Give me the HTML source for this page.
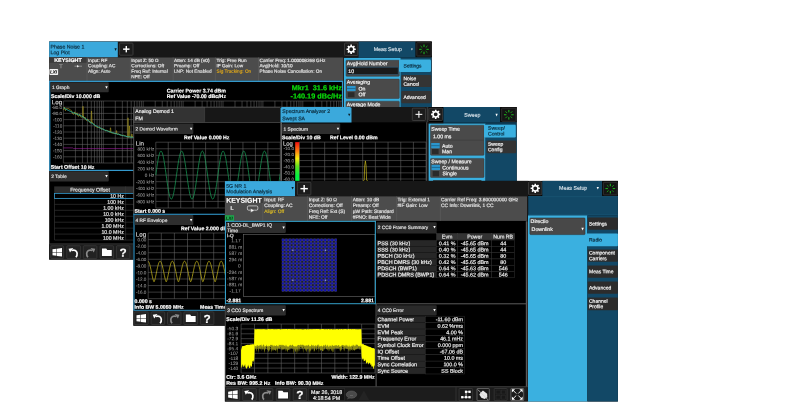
<!DOCTYPE html>
<html><head><meta charset="utf-8"><title>Keysight X-Series multi-touch UI</title>
<style>html,body{margin:0;padding:0;background:#fff}body{width:812px;height:411px;overflow:hidden}svg{display:block}text{white-space:pre;text-rendering:geometricPrecision;stroke-width:0.18px;stroke-linejoin:round}</style></head>
<body>
<svg width="812" height="411" viewBox="0 0 812 411" font-family="'Liberation Sans', sans-serif">
<defs><filter id="gs" x="0" y="0" width="812" height="411" filterUnits="userSpaceOnUse"><feOffset dx="0" dy="0"/></filter></defs>
<rect width="812" height="411" fill="#fff"/>
<g filter="url(#gs)">
<g id="w1">
<rect x="49.2" y="41.6" width="382.5" height="218" fill="#000"/>
<rect x="49.2" y="41.6" width="382.5" height="15.8" fill="#171717"/>
<rect x="49.2" y="41.6" width="68.6" height="15.8" fill="#3ba9dc"/>
<text x="50.6" y="48.55" transform="matrix(1 .0005 0 1 0 -0.0253)" font-size="5.2" fill="#0c2c3e" stroke="#0c2c3e">Phase Noise 1</text>
<text x="50.6" y="54.15" transform="matrix(1 .0005 0 1 0 -0.0253)" font-size="5.2" fill="#0c2c3e" stroke="#0c2c3e">Log Plot</text>
<path d="M114.45 48.3 h2.3 l-1.15 2.6 z" fill="#0a1a22"/>
<rect x="119.6" y="43.1" width="13.4" height="12.1" fill="#1c1c1c" stroke="#484848" stroke-width="0.7" rx="0.8"/>
<line x1="123.1" y1="49.15" x2="129.5" y2="49.15" stroke="#fff" stroke-width="1.45"/>
<line x1="126.3" y1="45.95" x2="126.3" y2="52.35" stroke="#fff" stroke-width="1.45"/>
<rect x="344.5" y="43" width="13.3" height="12.5" fill="#1c1c1c" stroke="#484848" stroke-width="0.7" rx="0.8"/>
<path d="M355.78 48.44 L355.78 50.06 L354.55 50.07 L354.13 51.08 L355 51.95 L353.85 53.1 L352.98 52.23 L351.97 52.65 L351.96 53.88 L350.34 53.88 L350.33 52.65 L349.32 52.23 L348.45 53.1 L347.3 51.95 L348.17 51.08 L347.75 50.07 L346.52 50.06 L346.52 48.44 L347.75 48.43 L348.17 47.42 L347.3 46.55 L348.45 45.4 L349.32 46.27 L350.33 45.85 L350.34 44.62 L351.96 44.62 L351.97 45.85 L352.98 46.27 L353.85 45.4 L355 46.55 L354.13 47.42 L354.55 48.43 Z M349.25 49.25 a1.9 1.9 0 1 0 3.8 0 a1.9 1.9 0 1 0 -3.8 0 Z" fill="#fff" fill-rule="evenodd"/>
<rect x="358.6" y="41.6" width="57" height="15.8" fill="#124866"/>
<text x="387.8" y="51.08" transform="matrix(1 .0005 0 1 0 -0.1939)" font-size="5.3" fill="#d2dee6" stroke="#d2dee6" text-anchor="middle">Meas Setup</text>
<path d="M411 48.4 h1.8 l-0.9 2.2 z" fill="#fff"/>
<rect x="415.6" y="41.6" width="16.1" height="15.9" fill="#0c0c0c"/>
<rect x="416.8" y="42.7" width="14.4" height="13.3" fill="#141414" stroke="#3a3a3a" stroke-width="0.7" rx="0.6"/>
<line x1="424" y1="46.55" x2="424" y2="44.9" stroke="#22d422" stroke-width="0.9" stroke-linecap="round"/>
<line x1="425.98" y1="47.37" x2="427.15" y2="46.2" stroke="#18b018" stroke-width="0.9" stroke-linecap="round"/>
<line x1="426.8" y1="49.35" x2="428.45" y2="49.35" stroke="#20cc20" stroke-width="0.9" stroke-linecap="round"/>
<line x1="425.98" y1="51.33" x2="427.15" y2="52.5" stroke="#149a14" stroke-width="0.9" stroke-linecap="round"/>
<line x1="424" y1="52.15" x2="424" y2="53.8" stroke="#22d022" stroke-width="0.9" stroke-linecap="round"/>
<line x1="422.02" y1="51.33" x2="420.85" y2="52.5" stroke="#18b418" stroke-width="0.9" stroke-linecap="round"/>
<line x1="421.2" y1="49.35" x2="419.55" y2="49.35" stroke="#20cc20" stroke-width="0.9" stroke-linecap="round"/>
<line x1="422.02" y1="47.37" x2="420.85" y2="46.2" stroke="#18ac18" stroke-width="0.9" stroke-linecap="round"/>
<rect x="49.2" y="57.4" width="293.8" height="23.3" fill="#4c4c4c"/>
<rect x="49.2" y="57.4" width="37.8" height="5.4" fill="#3a3a3a"/>
<line x1="87" y1="57.4" x2="87" y2="80.7" stroke="#5e5e5e" stroke-width="0.6"/>
<line x1="130.4" y1="57.4" x2="130.4" y2="80.7" stroke="#5e5e5e" stroke-width="0.6"/>
<line x1="173.1" y1="57.4" x2="173.1" y2="80.7" stroke="#5e5e5e" stroke-width="0.6"/>
<line x1="215.4" y1="57.4" x2="215.4" y2="80.7" stroke="#5e5e5e" stroke-width="0.6"/>
<line x1="258.5" y1="57.4" x2="258.5" y2="80.7" stroke="#5e5e5e" stroke-width="0.6"/>
<text x="68" y="62.12" transform="matrix(1 .0005 0 1 0 -0.0340)" font-size="5.4" fill="#fff" stroke="#fff" text-anchor="middle" font-weight="bold">KEYSIGHT</text>
<text x="61" y="68.29" transform="matrix(1 .0005 0 1 0 -0.0305)" font-size="5.6" fill="#9a9a9a" stroke="#9a9a9a" text-anchor="middle">T</text>
<line x1="74.5" y1="66.2" x2="82" y2="66.2" stroke="#cfcfcf" stroke-width="0.5"/>
<path d="M77 65 l2 1.2 l-2 1.2z" fill="#eee"/>
<rect x="49.4" y="69.1" width="8.7" height="5.8" fill="#f2f2f2" rx="0.6"/>
<text x="53.6" y="73.6" transform="matrix(1 .0005 0 1 0 -0.0268)" font-size="4.5" fill="#222" stroke="#222" text-anchor="middle" font-weight="bold" font-style="italic">LXI</text>
<text x="88" y="61.97" transform="matrix(1 .0005 0 1 0 -0.0440)" font-size="4.7" fill="#e4e4e4" stroke="#e4e4e4">Input: RF</text>
<text x="88" y="67.37" transform="matrix(1 .0005 0 1 0 -0.0440)" font-size="4.7" fill="#e4e4e4" stroke="#e4e4e4">Coupling: AC</text>
<text x="88" y="72.77" transform="matrix(1 .0005 0 1 0 -0.0440)" font-size="4.7" fill="#e4e4e4" stroke="#e4e4e4">Align: Auto</text>
<text x="131.3" y="61.97" transform="matrix(1 .0005 0 1 0 -0.0657)" font-size="4.7" fill="#e4e4e4" stroke="#e4e4e4">Input Z: 50 Ω</text>
<text x="131.3" y="67.37" transform="matrix(1 .0005 0 1 0 -0.0657)" font-size="4.7" fill="#e4e4e4" stroke="#e4e4e4">Corrections: Off</text>
<text x="131.3" y="72.77" transform="matrix(1 .0005 0 1 0 -0.0657)" font-size="4.7" fill="#e4e4e4" stroke="#e4e4e4">Freq Ref: Internal</text>
<text x="131.3" y="78.17" transform="matrix(1 .0005 0 1 0 -0.0657)" font-size="4.7" fill="#e4e4e4" stroke="#e4e4e4">NFE: Off</text>
<text x="174" y="61.97" transform="matrix(1 .0005 0 1 0 -0.0870)" font-size="4.7" fill="#e4e4e4" stroke="#e4e4e4">Atten: 14 dB (e0)</text>
<text x="174" y="67.37" transform="matrix(1 .0005 0 1 0 -0.0870)" font-size="4.7" fill="#e4e4e4" stroke="#e4e4e4">Preamp: Off</text>
<text x="174" y="72.77" transform="matrix(1 .0005 0 1 0 -0.0870)" font-size="4.7" fill="#e4e4e4" stroke="#e4e4e4">LNP: Not Enabled</text>
<text x="216.5" y="61.97" transform="matrix(1 .0005 0 1 0 -0.1082)" font-size="4.7" fill="#e4e4e4" stroke="#e4e4e4">Trig: Free Run</text>
<text x="216.5" y="67.37" transform="matrix(1 .0005 0 1 0 -0.1082)" font-size="4.7" fill="#e4e4e4" stroke="#e4e4e4">IF Gain: Low</text>
<text x="216.5" y="72.77" transform="matrix(1 .0005 0 1 0 -0.1082)" font-size="4.7" fill="#dba51c" stroke="#dba51c">Sig Tracking: On</text>
<text x="259.5" y="61.97" transform="matrix(1 .0005 0 1 0 -0.1298)" font-size="4.7" fill="#e4e4e4" stroke="#e4e4e4">Carrier Freq: 1.000008268 GHz</text>
<text x="259.5" y="67.37" transform="matrix(1 .0005 0 1 0 -0.1298)" font-size="4.7" fill="#e4e4e4" stroke="#e4e4e4">Avg|Hold: 10/10</text>
<text x="259.5" y="72.77" transform="matrix(1 .0005 0 1 0 -0.1298)" font-size="4.7" fill="#e4e4e4" stroke="#e4e4e4">Phase Noise Cancellation: On</text>
<rect x="49.2" y="80.6" width="294" height="1.4" fill="#3398cb"/>
<rect x="49.2" y="81" width="1.2" height="89.8" fill="#3398cb"/>
<rect x="341.9" y="81" width="1.3" height="27" fill="#3398cb"/>
<rect x="50.5" y="82.2" width="58.2" height="10.1" fill="#2e2e2e" rx="0.8"/>
<text x="52" y="89.1" transform="matrix(1 .0005 0 1 0 -0.0260)" font-size="4.8" fill="#e0e0e0" stroke="#e0e0e0">1 Graph</text>
<path d="M105.25 86.15 h2.5 l-1.25 2.5 z" fill="#fff"/>
<text x="51" y="98.06" transform="matrix(1 .0005 0 1 0 -0.0255)" font-size="5.25" fill="#fff" stroke="#fff" font-weight="bold">Scale/Div 10.000 dB</text>
<text x="196.4" y="92.56" transform="matrix(1 .0005 0 1 0 -0.0982)" font-size="5.25" fill="#fff" stroke="#fff" text-anchor="middle" font-weight="bold">Carrier Power 3.74 dBm</text>
<text x="196.4" y="97.96" transform="matrix(1 .0005 0 1 0 -0.0982)" font-size="5.25" fill="#fff" stroke="#fff" text-anchor="middle" font-weight="bold">Ref Value -70.00 dBc/Hz</text>
<text x="342" y="90.19" transform="matrix(1 .0005 0 1 0 -0.1710)" font-size="7.3" fill="#0be00b" stroke="#0be00b" text-anchor="end" font-weight="bold" xml:space="preserve">Mkr1  31.6 kHz</text>
<text x="342" y="98.49" transform="matrix(1 .0005 0 1 0 -0.1710)" font-size="7.3" fill="#0be00b" stroke="#0be00b" text-anchor="end" font-weight="bold">-140.19 dBc/Hz</text>
<text x="51.8" y="104.2" transform="matrix(1 .0005 0 1 0 -0.0259)" font-size="6.2" fill="#d0d0d0" stroke="#d0d0d0">Log</text>
<text x="62.2" y="108.93" transform="matrix(1 .0005 0 1 0 -0.0311)" font-size="4.6" fill="#9a9a9a" stroke="#9a9a9a" text-anchor="end" style="stroke-width:.06px">-80.0</text>
<text x="62.2" y="115.13" transform="matrix(1 .0005 0 1 0 -0.0311)" font-size="4.6" fill="#9a9a9a" stroke="#9a9a9a" text-anchor="end" style="stroke-width:.06px">-90.0</text>
<text x="62.2" y="121.33" transform="matrix(1 .0005 0 1 0 -0.0311)" font-size="4.6" fill="#9a9a9a" stroke="#9a9a9a" text-anchor="end" style="stroke-width:.06px">-100</text>
<text x="62.2" y="127.53" transform="matrix(1 .0005 0 1 0 -0.0311)" font-size="4.6" fill="#9a9a9a" stroke="#9a9a9a" text-anchor="end" style="stroke-width:.06px">-110</text>
<text x="62.2" y="133.73" transform="matrix(1 .0005 0 1 0 -0.0311)" font-size="4.6" fill="#9a9a9a" stroke="#9a9a9a" text-anchor="end" style="stroke-width:.06px">-120</text>
<text x="62.2" y="139.93" transform="matrix(1 .0005 0 1 0 -0.0311)" font-size="4.6" fill="#9a9a9a" stroke="#9a9a9a" text-anchor="end" style="stroke-width:.06px">-130</text>
<text x="62.2" y="146.13" transform="matrix(1 .0005 0 1 0 -0.0311)" font-size="4.6" fill="#9a9a9a" stroke="#9a9a9a" text-anchor="end" style="stroke-width:.06px">-140</text>
<text x="62.2" y="152.33" transform="matrix(1 .0005 0 1 0 -0.0311)" font-size="4.6" fill="#9a9a9a" stroke="#9a9a9a" text-anchor="end" style="stroke-width:.06px">-150</text>
<text x="62.2" y="158.53" transform="matrix(1 .0005 0 1 0 -0.0311)" font-size="4.6" fill="#9a9a9a" stroke="#9a9a9a" text-anchor="end" style="stroke-width:.06px">-160</text>
<line x1="63.4" y1="101" x2="342" y2="101" stroke="#686868" stroke-width="0.55"/>
<line x1="63.4" y1="107.2" x2="342" y2="107.2" stroke="#686868" stroke-width="0.55"/>
<line x1="63.4" y1="113.4" x2="342" y2="113.4" stroke="#686868" stroke-width="0.55"/>
<line x1="63.4" y1="119.6" x2="342" y2="119.6" stroke="#686868" stroke-width="0.55"/>
<line x1="63.4" y1="125.8" x2="342" y2="125.8" stroke="#686868" stroke-width="0.55"/>
<line x1="63.4" y1="132" x2="342" y2="132" stroke="#686868" stroke-width="0.55"/>
<line x1="63.4" y1="138.2" x2="342" y2="138.2" stroke="#686868" stroke-width="0.55"/>
<line x1="63.4" y1="144.4" x2="342" y2="144.4" stroke="#686868" stroke-width="0.55"/>
<line x1="63.4" y1="150.6" x2="342" y2="150.6" stroke="#686868" stroke-width="0.55"/>
<line x1="63.4" y1="156.8" x2="342" y2="156.8" stroke="#686868" stroke-width="0.55"/>
<line x1="63.4" y1="163" x2="342" y2="163" stroke="#686868" stroke-width="0.55"/>
<line x1="63.4" y1="101" x2="63.4" y2="163" stroke="#686868" stroke-width="0.55"/>
<line x1="75.41" y1="101" x2="75.41" y2="163" stroke="#686868" stroke-width="0.55"/>
<line x1="82.44" y1="101" x2="82.44" y2="163" stroke="#686868" stroke-width="0.55"/>
<line x1="87.42" y1="101" x2="87.42" y2="163" stroke="#686868" stroke-width="0.55"/>
<line x1="91.29" y1="101" x2="91.29" y2="163" stroke="#686868" stroke-width="0.55"/>
<line x1="94.45" y1="101" x2="94.45" y2="163" stroke="#686868" stroke-width="0.55"/>
<line x1="97.12" y1="101" x2="97.12" y2="163" stroke="#686868" stroke-width="0.55"/>
<line x1="99.43" y1="101" x2="99.43" y2="163" stroke="#686868" stroke-width="0.55"/>
<line x1="101.47" y1="101" x2="101.47" y2="163" stroke="#686868" stroke-width="0.55"/>
<line x1="103.3" y1="101" x2="103.3" y2="163" stroke="#686868" stroke-width="0.55"/>
<line x1="115.31" y1="101" x2="115.31" y2="163" stroke="#686868" stroke-width="0.55"/>
<line x1="122.34" y1="101" x2="122.34" y2="163" stroke="#686868" stroke-width="0.55"/>
<line x1="127.32" y1="101" x2="127.32" y2="163" stroke="#686868" stroke-width="0.55"/>
<line x1="131.19" y1="101" x2="131.19" y2="163" stroke="#686868" stroke-width="0.55"/>
<line x1="134.35" y1="101" x2="134.35" y2="163" stroke="#686868" stroke-width="0.55"/>
<line x1="137.02" y1="101" x2="137.02" y2="163" stroke="#686868" stroke-width="0.55"/>
<line x1="139.33" y1="101" x2="139.33" y2="163" stroke="#686868" stroke-width="0.55"/>
<line x1="141.37" y1="101" x2="141.37" y2="163" stroke="#686868" stroke-width="0.55"/>
<line x1="143.2" y1="101" x2="143.2" y2="163" stroke="#686868" stroke-width="0.55"/>
<line x1="155.21" y1="101" x2="155.21" y2="163" stroke="#686868" stroke-width="0.55"/>
<line x1="162.24" y1="101" x2="162.24" y2="163" stroke="#686868" stroke-width="0.55"/>
<line x1="167.22" y1="101" x2="167.22" y2="163" stroke="#686868" stroke-width="0.55"/>
<line x1="171.09" y1="101" x2="171.09" y2="163" stroke="#686868" stroke-width="0.55"/>
<line x1="174.25" y1="101" x2="174.25" y2="163" stroke="#686868" stroke-width="0.55"/>
<line x1="176.92" y1="101" x2="176.92" y2="163" stroke="#686868" stroke-width="0.55"/>
<line x1="179.23" y1="101" x2="179.23" y2="163" stroke="#686868" stroke-width="0.55"/>
<line x1="181.27" y1="101" x2="181.27" y2="163" stroke="#686868" stroke-width="0.55"/>
<line x1="183.1" y1="101" x2="183.1" y2="163" stroke="#686868" stroke-width="0.55"/>
<line x1="195.11" y1="101" x2="195.11" y2="163" stroke="#686868" stroke-width="0.55"/>
<line x1="202.14" y1="101" x2="202.14" y2="163" stroke="#686868" stroke-width="0.55"/>
<line x1="207.12" y1="101" x2="207.12" y2="163" stroke="#686868" stroke-width="0.55"/>
<line x1="210.99" y1="101" x2="210.99" y2="163" stroke="#686868" stroke-width="0.55"/>
<line x1="214.15" y1="101" x2="214.15" y2="163" stroke="#686868" stroke-width="0.55"/>
<line x1="216.82" y1="101" x2="216.82" y2="163" stroke="#686868" stroke-width="0.55"/>
<line x1="219.13" y1="101" x2="219.13" y2="163" stroke="#686868" stroke-width="0.55"/>
<line x1="221.17" y1="101" x2="221.17" y2="163" stroke="#686868" stroke-width="0.55"/>
<line x1="223" y1="101" x2="223" y2="163" stroke="#686868" stroke-width="0.55"/>
<line x1="235.01" y1="101" x2="235.01" y2="163" stroke="#686868" stroke-width="0.55"/>
<line x1="242.04" y1="101" x2="242.04" y2="163" stroke="#686868" stroke-width="0.55"/>
<line x1="247.02" y1="101" x2="247.02" y2="163" stroke="#686868" stroke-width="0.55"/>
<line x1="250.89" y1="101" x2="250.89" y2="163" stroke="#686868" stroke-width="0.55"/>
<line x1="254.05" y1="101" x2="254.05" y2="163" stroke="#686868" stroke-width="0.55"/>
<line x1="256.72" y1="101" x2="256.72" y2="163" stroke="#686868" stroke-width="0.55"/>
<line x1="259.03" y1="101" x2="259.03" y2="163" stroke="#686868" stroke-width="0.55"/>
<line x1="261.07" y1="101" x2="261.07" y2="163" stroke="#686868" stroke-width="0.55"/>
<line x1="262.9" y1="101" x2="262.9" y2="163" stroke="#686868" stroke-width="0.55"/>
<line x1="274.91" y1="101" x2="274.91" y2="163" stroke="#686868" stroke-width="0.55"/>
<line x1="281.94" y1="101" x2="281.94" y2="163" stroke="#686868" stroke-width="0.55"/>
<line x1="286.92" y1="101" x2="286.92" y2="163" stroke="#686868" stroke-width="0.55"/>
<line x1="290.79" y1="101" x2="290.79" y2="163" stroke="#686868" stroke-width="0.55"/>
<line x1="293.95" y1="101" x2="293.95" y2="163" stroke="#686868" stroke-width="0.55"/>
<line x1="296.62" y1="101" x2="296.62" y2="163" stroke="#686868" stroke-width="0.55"/>
<line x1="298.93" y1="101" x2="298.93" y2="163" stroke="#686868" stroke-width="0.55"/>
<line x1="300.97" y1="101" x2="300.97" y2="163" stroke="#686868" stroke-width="0.55"/>
<line x1="302.8" y1="101" x2="302.8" y2="163" stroke="#686868" stroke-width="0.55"/>
<line x1="314.81" y1="101" x2="314.81" y2="163" stroke="#686868" stroke-width="0.55"/>
<line x1="321.84" y1="101" x2="321.84" y2="163" stroke="#686868" stroke-width="0.55"/>
<line x1="326.82" y1="101" x2="326.82" y2="163" stroke="#686868" stroke-width="0.55"/>
<line x1="330.69" y1="101" x2="330.69" y2="163" stroke="#686868" stroke-width="0.55"/>
<line x1="333.85" y1="101" x2="333.85" y2="163" stroke="#686868" stroke-width="0.55"/>
<line x1="336.52" y1="101" x2="336.52" y2="163" stroke="#686868" stroke-width="0.55"/>
<line x1="338.83" y1="101" x2="338.83" y2="163" stroke="#686868" stroke-width="0.55"/>
<line x1="340.87" y1="101" x2="340.87" y2="163" stroke="#686868" stroke-width="0.55"/>
<path d="M63.4 147.9 L72.5 147.9 L73.5 148.6 L135 148.6" fill="none" stroke="#a21ea2" stroke-width="0.6" stroke-linejoin="round"/>
<path d="M63.5 110.04 L64.44 107.11 L65.46 110.64 L66.7 108.46 L67.66 108.8 L68.7 108.72 L69.47 109.3 L70.52 109.87 L71.46 110.84 L72.67 113.77 L73.7 114.29 L74.81 111.85 L75.89 114.71 L77.02 112.81 L78.01 116.1 L78.99 116.11 L79.84 113.97 L80.69 116.87 L81.91 117.25 L83.2 116.03 L84 118.49 L84.99 116.97 L85.74 119.74 L86.65 120.52 L87.63 118.96 L88.61 120.28 L89.73 122.52 L90.66 123.03 L91.64 122.17 L92.64 122.76 L93.41 123.47 L94.66 125.51 L95.63 126.43 L96.82 126.96 L98.12 127.73 L98.91 126.9 L100 127.38 L101.05 128.88 L101.84 129.34 L102.73 128.68 L103.74 129.24 L104.97 130.55 L105.9 130.95 L106.64 130.12 L107.6 130.65 L108.34 130.83 L109.36 132.13 L110.1 131.41 L110.89 132.74 L111.95 132.83 L113.16 133.33 L114.05 132.82 L114.95 133.83 L116.07 133.32 L117.34 134.37 L118.36 133.78 L119.24 134.05 L120.1 135.38 L121.01 134.61 L122.18 135.9 L123.25 135.14 L124.44 135.6 L125.44 135.61 L126.61 136.86 L127.72 137.11 L128.99 137.43 L129.91 136.62 L130.89 137.44 L131.96 136.77 L133.05 136.8 L133.83 137.99 L134.98 138.16" fill="none" stroke="#b5a520" stroke-width="0.65" stroke-linejoin="round"/>
<path d="M82.5 117 L82.9 106.3 L83.1 106.3 L83.5 117" fill="none" stroke="#b0a020" stroke-width="0.55" stroke-linejoin="round"/>
<path d="M91 122.97 L91.4 111 L91.6 111 L92 122.97" fill="none" stroke="#b0a020" stroke-width="0.55" stroke-linejoin="round"/>
<path d="M110 132.02 L110.4 127.8 L110.6 127.8 L111 132.02" fill="none" stroke="#b0a020" stroke-width="0.55" stroke-linejoin="round"/>
<path d="M116 133.8 L116.4 130.6 L116.6 130.6 L117 133.8" fill="none" stroke="#b0a020" stroke-width="0.55" stroke-linejoin="round"/>
<path d="M127.5 136.71 L127.9 117.8 L128.1 117.8 L128.5 136.71" fill="none" stroke="#b0a020" stroke-width="0.55" stroke-linejoin="round"/>
<path d="M128.9 136.89 L129.3 126 L129.5 126 L129.9 136.89" fill="none" stroke="#b0a020" stroke-width="0.55" stroke-linejoin="round"/>
<path d="M131.4 137.21 L131.8 134 L132 134 L132.4 137.21" fill="none" stroke="#b0a020" stroke-width="0.55" stroke-linejoin="round"/>
<path d="M63.5 107.8 L64 108.08 L64.5 108.36 L65 108.63 L65.5 108.91 L66 109.19 L66.5 109.47 L67 109.74 L67.5 110.02 L68 110.3 L68.5 110.53 L69 110.75 L69.5 110.98 L70 111.21 L70.5 111.44 L71 111.66 L71.5 111.89 L72 112.12 L72.5 112.34 L73 112.55 L73.5 112.75 L74 112.96 L74.5 113.17 L75 113.37 L75.5 113.58 L76 113.79 L76.5 113.99 L77 114.2 L77.5 114.4 L78 114.6 L78.5 114.8 L79 115 L79.5 115.2 L80 115.4 L80.5 115.6 L81 115.8 L81.5 116 L82 116.33 L82.5 116.67 L83 117 L83.5 117.33 L84 117.67 L84.5 118 L85 118.33 L85.5 118.67 L86 119 L86.5 119.37 L87 119.74 L87.5 120.11 L88 120.48 L88.5 120.85 L89 121.22 L89.5 121.59 L90 121.96 L90.5 122.33 L91 122.65 L91.5 122.97 L92 123.29 L92.5 123.61 L93 123.93 L93.5 124.25 L94 124.56 L94.5 124.88 L95 125.2 L95.5 125.48 L96 125.75 L96.5 126.03 L97 126.31 L97.5 126.58 L98 126.86 L98.5 127.14 L99 127.41 L99.5 127.69 L100 127.94 L100.5 128.17 L101 128.4 L101.5 128.64 L102 128.87 L102.5 129.1 L103 129.33 L103.5 129.57 L104 129.8 L104.5 129.97 L105 130.15 L105.5 130.32 L106 130.49 L106.5 130.67 L107 130.84 L107.5 131.01 L108 131.19 L108.5 131.36 L109 131.53 L109.5 131.7 L110 131.86 L110.5 132.02 L111 132.18 L111.5 132.35 L112 132.51 L112.5 132.67 L113 132.84 L113.5 133 L114 133.13 L114.5 133.27 L115 133.4 L115.5 133.53 L116 133.67 L116.5 133.8 L117 133.93 L117.5 134.07 L118 134.2 L118.5 134.34 L119 134.49 L119.5 134.63 L120 134.78 L120.5 134.92 L121 135.07 L121.5 135.21 L122 135.36 L122.5 135.5 L123 135.62 L123.5 135.74 L124 135.86 L124.5 135.98 L125 136.1 L125.5 136.22 L126 136.34 L126.5 136.46 L127 136.58 L127.5 136.65 L128 136.71 L128.5 136.78 L129 136.84 L129.5 136.9 L130 136.97 L130.5 137.03 L131 137.09 L131.5 137.16 L132 137.22 L132.5 137.28 L133 137.35 L133.5 137.41 L134 137.47 L134.5 137.54" fill="none" stroke="#28b8b0" stroke-width="0.85" stroke-linejoin="round"/>
<text x="50.7" y="168.86" transform="matrix(1 .0005 0 1 0 -0.0254)" font-size="5.25" fill="#fff" stroke="#fff" font-weight="bold">Start Offset 10 Hz</text>
<rect x="49.2" y="169.8" width="85.8" height="1.2" fill="#3398cb"/>
<rect x="49.4" y="171.2" width="59.3" height="10.3" fill="#2e2e2e" rx="0.8"/>
<text x="51.2" y="178" transform="matrix(1 .0005 0 1 0 -0.0256)" font-size="4.8" fill="#e0e0e0" stroke="#e0e0e0">2 Table</text>
<path d="M105.25 175.05 h2.5 l-1.25 2.5 z" fill="#fff"/>
<rect x="54.2" y="186.4" width="80.8" height="6.8" fill="#2c2c2c"/>
<line x1="125.6" y1="186.4" x2="125.6" y2="240" stroke="#3a3a3a" stroke-width="0.6"/>
<text x="90" y="191.45" transform="matrix(1 .0005 0 1 0 -0.0450)" font-size="5.2" fill="#e0e0e0" stroke="#e0e0e0" text-anchor="middle">Frequency Offset</text>
<line x1="54.5" y1="198.4" x2="135" y2="198.4" stroke="#3a3a3a" stroke-width="0.6"/>
<text x="123.9" y="197.71" transform="matrix(1 .0005 0 1 0 -0.0620)" font-size="5.25" fill="#e6e6e6" stroke="#e6e6e6" text-anchor="end">10 Hz</text>
<line x1="54.5" y1="204.35" x2="135" y2="204.35" stroke="#3a3a3a" stroke-width="0.6"/>
<text x="123.9" y="203.71" transform="matrix(1 .0005 0 1 0 -0.0620)" font-size="5.25" fill="#e6e6e6" stroke="#e6e6e6" text-anchor="end">100 Hz</text>
<line x1="54.5" y1="210.3" x2="135" y2="210.3" stroke="#3a3a3a" stroke-width="0.6"/>
<text x="123.9" y="209.71" transform="matrix(1 .0005 0 1 0 -0.0620)" font-size="5.25" fill="#e6e6e6" stroke="#e6e6e6" text-anchor="end">1.00 kHz</text>
<line x1="54.5" y1="216.25" x2="135" y2="216.25" stroke="#3a3a3a" stroke-width="0.6"/>
<text x="123.9" y="215.71" transform="matrix(1 .0005 0 1 0 -0.0620)" font-size="5.25" fill="#e6e6e6" stroke="#e6e6e6" text-anchor="end">10.0 kHz</text>
<line x1="54.5" y1="222.2" x2="135" y2="222.2" stroke="#3a3a3a" stroke-width="0.6"/>
<text x="123.9" y="221.71" transform="matrix(1 .0005 0 1 0 -0.0620)" font-size="5.25" fill="#e6e6e6" stroke="#e6e6e6" text-anchor="end">100 kHz</text>
<line x1="54.5" y1="228.15" x2="135" y2="228.15" stroke="#3a3a3a" stroke-width="0.6"/>
<text x="123.9" y="227.71" transform="matrix(1 .0005 0 1 0 -0.0620)" font-size="5.25" fill="#e6e6e6" stroke="#e6e6e6" text-anchor="end">1.00 MHz</text>
<line x1="54.5" y1="234.1" x2="135" y2="234.1" stroke="#3a3a3a" stroke-width="0.6"/>
<text x="123.9" y="233.71" transform="matrix(1 .0005 0 1 0 -0.0620)" font-size="5.25" fill="#e6e6e6" stroke="#e6e6e6" text-anchor="end">10.0 MHz</text>
<line x1="54.5" y1="240.05" x2="135" y2="240.05" stroke="#3a3a3a" stroke-width="0.6"/>
<text x="123.9" y="239.71" transform="matrix(1 .0005 0 1 0 -0.0620)" font-size="5.25" fill="#e6e6e6" stroke="#e6e6e6" text-anchor="end">100 MHz</text>
<line x1="54.5" y1="193.2" x2="54.5" y2="240" stroke="#3a3a3a" stroke-width="0.6"/>
<rect x="54.6" y="193.4" width="81.4" height="5.1" fill="none" stroke="#3398cb" stroke-width="0.8"/>
<rect x="49.2" y="243.8" width="382.5" height="15.8" fill="#1c1c1c"/>
<line x1="49.2" y1="243.8" x2="431.7" y2="243.8" stroke="#484848" stroke-width="0.6"/>
<rect x="50.8" y="245.8" width="12.8" height="12.8" fill="#222" stroke="#3e3e3e" stroke-width="0.7" rx="0.8"/>
<path d="M52.5 249.3 l4.0 -0.55 v3.45 h-4.0z M57 248.7 l5.0 -0.7 v4.2 h-5.0z M52.5 252.7 h4.0 v3.1 l-4.0 -0.55z M57 252.7 h5.0 v3.9 l-5.0 -0.7z" fill="#fff"/>
<rect x="66.8" y="245.8" width="13.8" height="12.8" fill="#222" stroke="#3e3e3e" stroke-width="0.7" rx="0.8"/>
<path d="M71.5 250.5 q4.8 -1.2 5.6 2.6 q0.3 2.4 -1.2 4.2" fill="none" stroke="#fff" stroke-width="1.7"/>
<path d="M68.5 248.7 l4.8 -0.7 l-3.3 4.4z" fill="#fff"/>
<rect x="83.3" y="245.8" width="13.6" height="12.8" fill="#222" stroke="#3e3e3e" stroke-width="0.7" rx="0.8"/>
<path d="M92.3 250.5 q-4.8 -1.2 -5.6 2.6 q-0.3 2.4 1.2 4.2" fill="none" stroke="#8a8a8a" stroke-width="1.7"/>
<path d="M95.3 248.7 l-4.8 -0.7 l3.3 4.4z" fill="#8a8a8a"/>
<rect x="100.1" y="245.8" width="13.5" height="12.8" fill="#222" stroke="#3e3e3e" stroke-width="0.7" rx="0.8"/>
<path d="M101.95 256.1 v-7.6 h4.3 l1.0 1.4 h4.5 v6.2z" fill="#fff"/>
<rect x="116.4" y="245.8" width="13.5" height="12.8" fill="#222" stroke="#3e3e3e" stroke-width="0.7" rx="0.8"/>
<text x="123.15" y="256.69" transform="matrix(1 .0005 0 1 0 -0.0616)" font-size="11.8" fill="#fff" stroke="#fff" text-anchor="middle" font-weight="bold">?</text>
<rect x="343.1" y="57.4" width="1" height="50.6" fill="#2a2a2a"/>
<rect x="344" y="57.4" width="14.5" height="0.6" fill="#1c1c1c"/>
<rect x="358.5" y="57.4" width="42.3" height="0.6" fill="#124866"/>
<rect x="344" y="57.9" width="56.8" height="50.1" fill="#3ab0e0"/>
<rect x="400.8" y="57.4" width="30.9" height="50.6" fill="#124866"/>
<rect x="346" y="60.3" width="53.3" height="16" fill="#4a4a4a" stroke="#3a3a3a" stroke-width="0.5" rx="0.8"/>
<text x="346.8" y="65.15" transform="matrix(1 .0005 0 1 0 -0.1734)" font-size="5.2" fill="#f4f4f4" stroke="#f4f4f4">Avg|Hold Number</text>
<rect x="347" y="67.2" width="51.3" height="7.4" fill="#1a1a1a" stroke="#2f5f80" stroke-width="0.6" rx="0.6"/>
<text x="348.3" y="72.95" transform="matrix(1 .0005 0 1 0 -0.1741)" font-size="5.2" fill="#f4f4f4" stroke="#f4f4f4">10</text>
<rect x="346" y="79.1" width="53.3" height="19.4" fill="#4a4a4a" stroke="#3a3a3a" stroke-width="0.5" rx="0.8"/>
<text x="346.8" y="83.85" transform="matrix(1 .0005 0 1 0 -0.1734)" font-size="5.2" fill="#f4f4f4" stroke="#f4f4f4">Averaging</text>
<rect x="347" y="86" width="8.6" height="5.1" fill="#2b95cc"/>
<line x1="347" y1="88.5" x2="355.6" y2="88.5" stroke="#175a80" stroke-width="0.7"/>
<text x="358.5" y="90.45" transform="matrix(1 .0005 0 1 0 -0.1792)" font-size="5.2" fill="#f4f4f4" stroke="#f4f4f4">On</text>
<rect x="347.8" y="92.2" width="6.7" height="5" fill="#2a2a2a"/>
<text x="358.5" y="96.25" transform="matrix(1 .0005 0 1 0 -0.1792)" font-size="5.2" fill="#f4f4f4" stroke="#f4f4f4">Off</text>
<rect x="346" y="101.2" width="53.3" height="6.8" fill="#4a4a4a" stroke="#3a3a3a" stroke-width="0.5" rx="0.8"/>
<text x="346.8" y="106.15" transform="matrix(1 .0005 0 1 0 -0.1734)" font-size="5.2" fill="#f4f4f4" stroke="#f4f4f4">Average Mode</text>
<rect x="399" y="59.5" width="32" height="12.4" fill="#3ab0e0" rx="1.2"/>
<text x="403.5" y="67.58" transform="matrix(1 .0005 0 1 0 -0.2018)" font-size="5" fill="#0c2c3e" stroke="#0c2c3e">Settings</text>
<rect x="401.3" y="75" width="29.9" height="12.1" fill="#343434" rx="1.2"/>
<text x="403.5" y="80.18" transform="matrix(1 .0005 0 1 0 -0.2018)" font-size="5" fill="#f4f4f4" stroke="#f4f4f4">Noise</text>
<text x="403.5" y="85.68" transform="matrix(1 .0005 0 1 0 -0.2018)" font-size="5" fill="#f4f4f4" stroke="#f4f4f4">Cancel</text>
<rect x="401.3" y="90.9" width="29.9" height="12.3" fill="#343434" rx="1.2"/>
<text x="403.5" y="98.98" transform="matrix(1 .0005 0 1 0 -0.2018)" font-size="5" fill="#f4f4f4" stroke="#f4f4f4">Advanced</text>
</g>
<g id="w2">
<rect x="133.4" y="107" width="166.6" height="218.7" fill="#000"/>
<rect x="133.4" y="107" width="166.6" height="15.3" fill="#171717"/>
<line x1="133.4" y1="107.3" x2="300" y2="107.3" stroke="#6a6a6a" stroke-width="0.6"/>
<rect x="133.4" y="107.2" width="71" height="15.1" fill="#333" rx="1"/>
<line x1="133.4" y1="122.5" x2="300" y2="122.5" stroke="#626262" stroke-width="0.6"/>
<line x1="204.6" y1="107.2" x2="204.6" y2="122.3" stroke="#555" stroke-width="0.5"/>
<line x1="133.4" y1="107.3" x2="204.6" y2="107.3" stroke="#6a6a6a" stroke-width="0.5"/>
<text x="135.3" y="112.95" transform="matrix(1 .0005 0 1 0 -0.0677)" font-size="5.2" fill="#f0f0f0" stroke="#f0f0f0">Analog Demod 1</text>
<text x="135.3" y="120.35" transform="matrix(1 .0005 0 1 0 -0.0677)" font-size="5.2" fill="#f0f0f0" stroke="#f0f0f0">FM</text>
<line x1="133.7" y1="107" x2="133.7" y2="214" stroke="#777" stroke-width="0.7"/>
<rect x="134" y="123.4" width="59.3" height="10.5" fill="#2e2e2e" rx="0.8"/>
<text x="135.6" y="130.59" transform="matrix(1 .0005 0 1 0 -0.0678)" font-size="4.75" fill="#e0e0e0" stroke="#e0e0e0">2 Demod Waveform</text>
<path d="M189.85 127.65 h2.5 l-1.25 2.5 z" fill="#fff"/>
<text x="183.9" y="139.15" transform="matrix(1 .0005 0 1 0 -0.0920)" font-size="5.2" fill="#fff" stroke="#fff" font-weight="bold">Ref Value 0.000 Hz</text>
<text x="135.8" y="145.5" transform="matrix(1 .0005 0 1 0 -0.0679)" font-size="6.2" fill="#d0d0d0" stroke="#d0d0d0">Lin</text>
<text x="154.3" y="150.51" transform="matrix(1 .0005 0 1 0 -0.0772)" font-size="4.6" fill="#9a9a9a" stroke="#9a9a9a" text-anchor="end" style="stroke-width:.06px">800 kHz</text>
<text x="154.3" y="157.09" transform="matrix(1 .0005 0 1 0 -0.0772)" font-size="4.6" fill="#9a9a9a" stroke="#9a9a9a" text-anchor="end" style="stroke-width:.06px">600 kHz</text>
<text x="154.3" y="163.67" transform="matrix(1 .0005 0 1 0 -0.0772)" font-size="4.6" fill="#9a9a9a" stroke="#9a9a9a" text-anchor="end" style="stroke-width:.06px">400 kHz</text>
<text x="154.3" y="170.25" transform="matrix(1 .0005 0 1 0 -0.0772)" font-size="4.6" fill="#9a9a9a" stroke="#9a9a9a" text-anchor="end" style="stroke-width:.06px">200 kHz</text>
<text x="154.3" y="176.83" transform="matrix(1 .0005 0 1 0 -0.0772)" font-size="4.6" fill="#9a9a9a" stroke="#9a9a9a" text-anchor="end" style="stroke-width:.06px">0 Hz</text>
<text x="154.3" y="183.41" transform="matrix(1 .0005 0 1 0 -0.0772)" font-size="4.6" fill="#9a9a9a" stroke="#9a9a9a" text-anchor="end" style="stroke-width:.06px">-200 kHz</text>
<text x="154.3" y="189.99" transform="matrix(1 .0005 0 1 0 -0.0772)" font-size="4.6" fill="#9a9a9a" stroke="#9a9a9a" text-anchor="end" style="stroke-width:.06px">-400 kHz</text>
<text x="154.3" y="196.57" transform="matrix(1 .0005 0 1 0 -0.0772)" font-size="4.6" fill="#9a9a9a" stroke="#9a9a9a" text-anchor="end" style="stroke-width:.06px">-600 kHz</text>
<text x="154.3" y="203.15" transform="matrix(1 .0005 0 1 0 -0.0772)" font-size="4.6" fill="#9a9a9a" stroke="#9a9a9a" text-anchor="end" style="stroke-width:.06px">-800 kHz</text>
<line x1="155.8" y1="142.2" x2="280.3" y2="142.2" stroke="#686868" stroke-width="0.55"/>
<line x1="155.8" y1="142.2" x2="155.8" y2="208" stroke="#686868" stroke-width="0.55"/>
<line x1="155.8" y1="148.78" x2="280.3" y2="148.78" stroke="#686868" stroke-width="0.55"/>
<line x1="168.25" y1="142.2" x2="168.25" y2="208" stroke="#686868" stroke-width="0.55"/>
<line x1="155.8" y1="155.36" x2="280.3" y2="155.36" stroke="#686868" stroke-width="0.55"/>
<line x1="180.7" y1="142.2" x2="180.7" y2="208" stroke="#686868" stroke-width="0.55"/>
<line x1="155.8" y1="161.94" x2="280.3" y2="161.94" stroke="#686868" stroke-width="0.55"/>
<line x1="193.15" y1="142.2" x2="193.15" y2="208" stroke="#686868" stroke-width="0.55"/>
<line x1="155.8" y1="168.52" x2="280.3" y2="168.52" stroke="#686868" stroke-width="0.55"/>
<line x1="205.6" y1="142.2" x2="205.6" y2="208" stroke="#686868" stroke-width="0.55"/>
<line x1="155.8" y1="175.1" x2="280.3" y2="175.1" stroke="#686868" stroke-width="0.55"/>
<line x1="218.05" y1="142.2" x2="218.05" y2="208" stroke="#686868" stroke-width="0.55"/>
<line x1="155.8" y1="181.68" x2="280.3" y2="181.68" stroke="#686868" stroke-width="0.55"/>
<line x1="230.5" y1="142.2" x2="230.5" y2="208" stroke="#686868" stroke-width="0.55"/>
<line x1="155.8" y1="188.26" x2="280.3" y2="188.26" stroke="#686868" stroke-width="0.55"/>
<line x1="242.95" y1="142.2" x2="242.95" y2="208" stroke="#686868" stroke-width="0.55"/>
<line x1="155.8" y1="194.84" x2="280.3" y2="194.84" stroke="#686868" stroke-width="0.55"/>
<line x1="255.4" y1="142.2" x2="255.4" y2="208" stroke="#686868" stroke-width="0.55"/>
<line x1="155.8" y1="201.42" x2="280.3" y2="201.42" stroke="#686868" stroke-width="0.55"/>
<line x1="267.85" y1="142.2" x2="267.85" y2="208" stroke="#686868" stroke-width="0.55"/>
<line x1="155.8" y1="208" x2="280.3" y2="208" stroke="#686868" stroke-width="0.55"/>
<line x1="280.3" y1="142.2" x2="280.3" y2="208" stroke="#686868" stroke-width="0.55"/>
<path d="M155.8 175.1 L156.2 172.19 L156.6 169.33 L157 166.55 L157.4 163.9 L157.8 161.41 L158.2 159.12 L158.6 157.07 L159 155.28 L159.4 153.79 L159.8 152.61 L160.2 151.76 L160.6 151.26 L161 151.1 L161.4 151.3 L161.8 151.85 L162.2 152.74 L162.6 153.96 L163 155.49 L163.4 157.31 L163.8 159.4 L164.2 161.71 L164.6 164.22 L165 166.89 L165.4 169.68 L165.8 172.56 L166.2 175.46 L166.6 178.37 L167 181.22 L167.4 183.99 L167.8 186.62 L168.2 189.09 L168.6 191.35 L169 193.37 L169.4 195.12 L169.8 196.57 L170.2 197.71 L170.6 198.52 L171 198.98 L171.4 199.09 L171.8 198.85 L172.2 198.26 L172.6 197.33 L173 196.06 L173.4 194.49 L173.8 192.64 L174.2 190.53 L174.6 188.19 L175 185.65 L175.4 182.97 L175.8 180.16 L176.2 177.28 L176.6 174.37 L177 171.47 L177.4 168.62 L177.8 165.87 L178.2 163.26 L178.6 160.82 L179 158.59 L179.4 156.6 L179.8 154.88 L180.2 153.47 L180.6 152.37 L181 151.6 L181.4 151.18 L181.8 151.12 L182.2 151.4 L182.6 152.04 L183 153.02 L183.4 154.32 L183.8 155.92 L184.2 157.81 L184.6 159.95 L185 162.32 L185.4 164.87 L185.8 167.58 L186.2 170.4 L186.6 173.28 L187 176.19 L187.4 179.09 L187.8 181.93 L188.2 184.66 L188.6 187.26 L189 189.67 L189.4 191.88 L189.8 193.83 L190.2 195.51 L190.6 196.89 L191 197.95 L191.4 198.67 L191.8 199.04 L192.2 199.07 L192.6 198.74 L193 198.06 L193.4 197.04 L193.8 195.7 L194.2 194.06 L194.6 192.13 L195 189.96 L195.4 187.57 L195.8 184.99 L196.2 182.27 L196.6 179.45 L197 176.56 L197.4 173.64 L197.8 170.75 L198.2 167.93 L198.6 165.21 L199 162.63 L199.4 160.24 L199.8 158.07 L200.2 156.14 L200.6 154.5 L201 153.16 L201.4 152.14 L201.8 151.46 L202.2 151.13 L202.6 151.16 L203 151.53 L203.4 152.25 L203.8 153.31 L204.2 154.69 L204.6 156.37 L205 158.32 L205.4 160.53 L205.8 162.94 L206.2 165.54 L206.6 168.27 L207 171.11 L207.4 174.01 L207.8 176.92 L208.2 179.8 L208.6 182.62 L209 185.33 L209.4 187.88 L209.8 190.25 L210.2 192.39 L210.6 194.28 L211 195.88 L211.4 197.18 L211.8 198.16 L212.2 198.8 L212.6 199.08 L213 199.02 L213.4 198.6 L213.8 197.83 L214.2 196.73 L214.6 195.32 L215 193.6 L215.4 191.61 L215.8 189.38 L216.2 186.94 L216.6 184.33 L217 181.58 L217.4 178.73 L217.8 175.83 L218.2 172.92 L218.6 170.04 L219 167.23 L219.4 164.55 L219.8 162.01 L220.2 159.67 L220.6 157.56 L221 155.71 L221.4 154.14 L221.8 152.87 L222.2 151.94 L222.6 151.35 L223 151.11 L223.4 151.22 L223.8 151.68 L224.2 152.49 L224.6 153.63 L225 155.08 L225.4 156.83 L225.8 158.85 L226.2 161.11 L226.6 163.58 L227 166.21 L227.4 168.98 L227.8 171.83 L228.2 174.74 L228.6 177.64 L229 180.52 L229.4 183.31 L229.8 185.98 L230.2 188.49 L230.6 190.8 L231 192.89 L231.4 194.71 L231.8 196.24 L232.2 197.46 L232.6 198.35 L233 198.9 L233.4 199.1 L233.8 198.94 L234.2 198.44 L234.6 197.59 L235 196.41 L235.4 194.92 L235.8 193.13 L236.2 191.08 L236.6 188.79 L237 186.3 L237.4 183.65 L237.8 180.87 L238.2 178.01 L238.6 175.1 L239 172.19 L239.4 169.33 L239.8 166.55 L240.2 163.9 L240.6 161.41 L241 159.12 L241.4 157.07 L241.8 155.28 L242.2 153.79 L242.6 152.61 L243 151.76 L243.4 151.26 L243.8 151.1 L244.2 151.3 L244.6 151.85 L245 152.74 L245.4 153.96 L245.8 155.49 L246.2 157.31 L246.6 159.4 L247 161.71 L247.4 164.22 L247.8 166.89 L248.2 169.68 L248.6 172.56 L249 175.46 L249.4 178.37 L249.8 181.22 L250.2 183.99 L250.6 186.62 L251 189.09 L251.4 191.35 L251.8 193.37 L252.2 195.12 L252.6 196.57 L253 197.71 L253.4 198.52 L253.8 198.98 L254.2 199.09 L254.6 198.85 L255 198.26 L255.4 197.33 L255.8 196.06 L256.2 194.49 L256.6 192.64 L257 190.53 L257.4 188.19 L257.8 185.65 L258.2 182.97 L258.6 180.16 L259 177.28 L259.4 174.37 L259.8 171.47 L260.2 168.62 L260.6 165.87 L261 163.26 L261.4 160.82 L261.8 158.59 L262.2 156.6 L262.6 154.88 L263 153.47 L263.4 152.37 L263.8 151.6 L264.2 151.18 L264.6 151.12 L265 151.4 L265.4 152.04 L265.8 153.02 L266.2 154.32 L266.6 155.92 L267 157.81 L267.4 159.95 L267.8 162.32 L268.2 164.87 L268.6 167.58 L269 170.4 L269.4 173.28 L269.8 176.19 L270.2 179.09 L270.6 181.93 L271 184.66 L271.4 187.26 L271.8 189.67 L272.2 191.88 L272.6 193.83 L273 195.51 L273.4 196.89 L273.8 197.95 L274.2 198.67 L274.6 199.04 L275 199.07 L275.4 198.74 L275.8 198.06 L276.2 197.04 L276.6 195.7 L277 194.06 L277.4 192.13 L277.8 189.96 L278.2 187.57 L278.6 184.99 L279 182.27 L279.4 179.45 L279.8 176.56 L280.2 173.64" fill="none" stroke="#1aae60" stroke-width="0.65" stroke-linejoin="round"/>
<text x="134.6" y="212.65" transform="matrix(1 .0005 0 1 0 -0.0673)" font-size="5.2" fill="#fff" stroke="#fff" font-weight="bold">Start 0.000 s</text>
<rect x="133.4" y="213.7" width="166.6" height="1.2" fill="#2c88b6"/>
<rect x="133.4" y="214" width="1.2" height="96.5" fill="#2c88b6"/>
<rect x="134.6" y="215" width="58.7" height="10.1" fill="#2e2e2e" rx="0.8"/>
<text x="135.6" y="221.9" transform="matrix(1 .0005 0 1 0 -0.0678)" font-size="4.8" fill="#e0e0e0" stroke="#e0e0e0">4 RF Envelope</text>
<path d="M189.85 218.95 h2.5 l-1.25 2.5 z" fill="#fff"/>
<text x="181" y="230.35" transform="matrix(1 .0005 0 1 0 -0.0905)" font-size="5.2" fill="#fff" stroke="#fff" font-weight="bold">Ref Value 2.000 dBm</text>
<text x="135.8" y="236.5" transform="matrix(1 .0005 0 1 0 -0.0679)" font-size="6.2" fill="#d0d0d0" stroke="#d0d0d0">Log</text>
<text x="146.4" y="241.3" transform="matrix(1 .0005 0 1 0 -0.0732)" font-size="4.6" fill="#9a9a9a" stroke="#9a9a9a" text-anchor="end" style="stroke-width:.06px">0.00</text>
<text x="146.4" y="247.87" transform="matrix(1 .0005 0 1 0 -0.0732)" font-size="4.6" fill="#9a9a9a" stroke="#9a9a9a" text-anchor="end" style="stroke-width:.06px">-2.00</text>
<text x="146.4" y="254.44" transform="matrix(1 .0005 0 1 0 -0.0732)" font-size="4.6" fill="#9a9a9a" stroke="#9a9a9a" text-anchor="end" style="stroke-width:.06px">-4.00</text>
<text x="146.4" y="261.01" transform="matrix(1 .0005 0 1 0 -0.0732)" font-size="4.6" fill="#9a9a9a" stroke="#9a9a9a" text-anchor="end" style="stroke-width:.06px">-6.00</text>
<text x="146.4" y="267.58" transform="matrix(1 .0005 0 1 0 -0.0732)" font-size="4.6" fill="#9a9a9a" stroke="#9a9a9a" text-anchor="end" style="stroke-width:.06px">-8.00</text>
<text x="146.4" y="274.15" transform="matrix(1 .0005 0 1 0 -0.0732)" font-size="4.6" fill="#9a9a9a" stroke="#9a9a9a" text-anchor="end" style="stroke-width:.06px">-10.0</text>
<text x="146.4" y="280.72" transform="matrix(1 .0005 0 1 0 -0.0732)" font-size="4.6" fill="#9a9a9a" stroke="#9a9a9a" text-anchor="end" style="stroke-width:.06px">-12.0</text>
<text x="146.4" y="287.29" transform="matrix(1 .0005 0 1 0 -0.0732)" font-size="4.6" fill="#9a9a9a" stroke="#9a9a9a" text-anchor="end" style="stroke-width:.06px">-14.0</text>
<text x="146.4" y="293.86" transform="matrix(1 .0005 0 1 0 -0.0732)" font-size="4.6" fill="#9a9a9a" stroke="#9a9a9a" text-anchor="end" style="stroke-width:.06px">-16.0</text>
<line x1="148.2" y1="233" x2="279.2" y2="233" stroke="#686868" stroke-width="0.55"/>
<line x1="148.2" y1="233" x2="148.2" y2="298.7" stroke="#686868" stroke-width="0.55"/>
<line x1="148.2" y1="239.57" x2="279.2" y2="239.57" stroke="#686868" stroke-width="0.55"/>
<line x1="161.3" y1="233" x2="161.3" y2="298.7" stroke="#686868" stroke-width="0.55"/>
<line x1="148.2" y1="246.14" x2="279.2" y2="246.14" stroke="#686868" stroke-width="0.55"/>
<line x1="174.4" y1="233" x2="174.4" y2="298.7" stroke="#686868" stroke-width="0.55"/>
<line x1="148.2" y1="252.71" x2="279.2" y2="252.71" stroke="#686868" stroke-width="0.55"/>
<line x1="187.5" y1="233" x2="187.5" y2="298.7" stroke="#686868" stroke-width="0.55"/>
<line x1="148.2" y1="259.28" x2="279.2" y2="259.28" stroke="#686868" stroke-width="0.55"/>
<line x1="200.6" y1="233" x2="200.6" y2="298.7" stroke="#686868" stroke-width="0.55"/>
<line x1="148.2" y1="265.85" x2="279.2" y2="265.85" stroke="#686868" stroke-width="0.55"/>
<line x1="213.7" y1="233" x2="213.7" y2="298.7" stroke="#686868" stroke-width="0.55"/>
<line x1="148.2" y1="272.42" x2="279.2" y2="272.42" stroke="#686868" stroke-width="0.55"/>
<line x1="226.8" y1="233" x2="226.8" y2="298.7" stroke="#686868" stroke-width="0.55"/>
<line x1="148.2" y1="278.99" x2="279.2" y2="278.99" stroke="#686868" stroke-width="0.55"/>
<line x1="239.9" y1="233" x2="239.9" y2="298.7" stroke="#686868" stroke-width="0.55"/>
<line x1="148.2" y1="285.56" x2="279.2" y2="285.56" stroke="#686868" stroke-width="0.55"/>
<line x1="253" y1="233" x2="253" y2="298.7" stroke="#686868" stroke-width="0.55"/>
<line x1="148.2" y1="292.13" x2="279.2" y2="292.13" stroke="#686868" stroke-width="0.55"/>
<line x1="266.1" y1="233" x2="266.1" y2="298.7" stroke="#686868" stroke-width="0.55"/>
<line x1="148.2" y1="298.7" x2="279.2" y2="298.7" stroke="#686868" stroke-width="0.55"/>
<line x1="279.2" y1="233" x2="279.2" y2="298.7" stroke="#686868" stroke-width="0.55"/>
<path d="M148.2 261.29 L148.5 261.57 L148.8 262.02 L149.1 262.64 L149.4 263.43 L149.7 264.36 L150 265.43 L150.3 266.63 L150.6 267.92 L150.9 269.29 L151.2 270.72 L151.5 272.19 L151.8 273.67 L152.1 275.13 L152.4 276.55 L152.7 277.89 L153 279.12 L153.3 280.21 L153.6 281.1 L153.9 281.7 L154.2 281.58 L154.5 280.88 L154.8 279.93 L155.1 278.8 L155.4 277.54 L155.7 276.17 L156 274.74 L156.3 273.28 L156.6 271.8 L156.9 270.34 L157.2 268.92 L157.5 267.57 L157.8 266.3 L158.1 265.14 L158.4 264.1 L158.7 263.2 L159 262.46 L159.3 261.88 L159.6 261.48 L159.9 261.25 L160.2 261.21 L160.5 261.35 L160.8 261.67 L161.1 262.17 L161.4 262.84 L161.7 263.66 L162 264.64 L162.3 265.74 L162.6 266.96 L162.9 268.28 L163.2 269.67 L163.5 271.11 L163.8 272.59 L164.1 274.06 L164.4 275.51 L164.7 276.91 L165 278.23 L165.3 279.43 L165.6 280.47 L165.9 281.29 L166.2 281.79 L166.5 281.42 L166.8 280.65 L167.1 279.65 L167.4 278.48 L167.7 277.18 L168 275.8 L168.3 274.35 L168.6 272.88 L168.9 271.41 L169.2 269.95 L169.5 268.55 L169.8 267.22 L170.1 265.98 L170.4 264.85 L170.7 263.85 L171 262.99 L171.3 262.29 L171.6 261.75 L171.9 261.4 L172.2 261.22 L172.5 261.23 L172.8 261.42 L173.1 261.79 L173.4 262.33 L173.7 263.04 L174 263.91 L174.3 264.92 L174.6 266.06 L174.9 267.3 L175.2 268.64 L175.5 270.05 L175.8 271.5 L176.1 272.98 L176.4 274.45 L176.7 275.89 L177 277.27 L177.3 278.56 L177.6 279.72 L177.9 280.71 L178.2 281.46 L178.5 281.77 L178.8 281.25 L179.1 280.4 L179.4 279.35 L179.7 278.14 L180 276.82 L180.3 275.42 L180.6 273.96 L180.9 272.49 L181.2 271.02 L181.5 269.57 L181.8 268.19 L182.1 266.88 L182.4 265.66 L182.7 264.57 L183 263.6 L183.3 262.79 L183.6 262.13 L183.9 261.64 L184.2 261.33 L184.5 261.2 L184.8 261.26 L185.1 261.5 L185.4 261.91 L185.7 262.5 L186 263.26 L186.3 264.16 L186.6 265.21 L186.9 266.38 L187.2 267.65 L187.5 269.01 L187.8 270.43 L188.1 271.9 L188.4 273.37 L188.7 274.84 L189 276.27 L189.3 277.63 L189.6 278.88 L189.9 280 L190.2 280.94 L190.5 281.61 L190.8 281.67 L191.1 281.05 L191.4 280.14 L191.7 279.04 L192 277.8 L192.3 276.45 L192.6 275.03 L192.9 273.57 L193.2 272.09 L193.5 270.63 L193.8 269.2 L194.1 267.83 L194.4 266.54 L194.7 265.36 L195 264.3 L195.3 263.37 L195.6 262.59 L195.9 261.98 L196.2 261.54 L196.5 261.28 L196.8 261.2 L197.1 261.3 L197.4 261.59 L197.7 262.05 L198 262.69 L198.3 263.48 L198.6 264.43 L198.9 265.51 L199.2 266.71 L199.5 268.01 L199.8 269.39 L200.1 270.82 L200.4 272.29 L200.7 273.77 L201 275.23 L201.3 276.64 L201.6 277.97 L201.9 279.2 L202.2 280.27 L202.5 281.15 L202.8 281.73 L203.1 281.54 L203.4 280.83 L203.7 279.86 L204 278.72 L204.3 277.45 L204.6 276.08 L204.9 274.65 L205.2 273.18 L205.5 271.7 L205.8 270.24 L206.1 268.83 L206.4 267.48 L206.7 266.22 L207 265.06 L207.3 264.04 L207.6 263.15 L207.9 262.42 L208.2 261.85 L208.5 261.45 L208.8 261.24 L209.1 261.21 L209.4 261.36 L209.7 261.7 L210 262.21 L210.3 262.89 L210.6 263.72 L210.9 264.71 L211.2 265.82 L211.5 267.05 L211.8 268.37 L212.1 269.76 L212.4 271.21 L212.7 272.68 L213 274.16 L213.3 275.61 L213.6 277 L213.9 278.31 L214.2 279.5 L214.5 280.53 L214.8 281.34 L215.1 281.8 L215.4 281.38 L215.7 280.59 L216 279.57 L216.3 278.4 L216.6 277.09 L216.9 275.7 L217.2 274.26 L217.5 272.78 L217.8 271.31 L218.1 269.86 L218.4 268.46 L218.7 267.13 L219 265.9 L219.3 264.78 L219.6 263.78 L219.9 262.94 L220.2 262.25 L220.5 261.73 L220.8 261.38 L221.1 261.21 L221.4 261.23 L221.7 261.43 L222 261.82 L222.3 262.37 L222.6 263.09 L222.9 263.97 L223.2 264.99 L223.5 266.14 L223.8 267.39 L224.1 268.73 L224.4 270.15 L224.7 271.6 L225 273.08 L225.3 274.55 L225.6 275.99 L225.9 277.36 L226.2 278.64 L226.5 279.79 L226.8 280.77 L227.1 281.5 L227.4 281.75 L227.7 281.2 L228 280.34 L228.3 279.27 L228.6 278.06 L228.9 276.73 L229.2 275.32 L229.5 273.87 L229.8 272.39 L230.1 270.92 L230.4 269.48 L230.7 268.1 L231 266.79 L231.3 265.59 L231.6 264.5 L231.9 263.54 L232.2 262.74 L232.5 262.09 L232.8 261.62 L233.1 261.32 L233.4 261.2 L233.7 261.27 L234 261.52 L234.3 261.95 L234.6 262.55 L234.9 263.31 L235.2 264.23 L235.5 265.28 L235.8 266.46 L236.1 267.74 L236.4 269.11 L236.7 270.53 L237 272 L237.3 273.47 L237.6 274.94 L237.9 276.36 L238.2 277.71 L238.5 278.96 L238.8 280.07 L239.1 280.99 L239.4 281.64 L239.7 281.64 L240 280.99 L240.3 280.07 L240.6 278.96 L240.9 277.71 L241.2 276.36 L241.5 274.94 L241.8 273.47 L242.1 272 L242.4 270.53 L242.7 269.11 L243 267.74 L243.3 266.46 L243.6 265.28 L243.9 264.23 L244.2 263.31 L244.5 262.55 L244.8 261.95 L245.1 261.52 L245.4 261.27 L245.7 261.2 L246 261.32 L246.3 261.62 L246.6 262.09 L246.9 262.74 L247.2 263.54 L247.5 264.5 L247.8 265.59 L248.1 266.79 L248.4 268.1 L248.7 269.48 L249 270.92 L249.3 272.39 L249.6 273.87 L249.9 275.32 L250.2 276.73 L250.5 278.06 L250.8 279.27 L251.1 280.34 L251.4 281.2 L251.7 281.75 L252 281.5 L252.3 280.77 L252.6 279.79 L252.9 278.64 L253.2 277.36 L253.5 275.99 L253.8 274.55 L254.1 273.08 L254.4 271.6 L254.7 270.15 L255 268.73 L255.3 267.39 L255.6 266.14 L255.9 264.99 L256.2 263.97 L256.5 263.09 L256.8 262.37 L257.1 261.82 L257.4 261.43 L257.7 261.23 L258 261.21 L258.3 261.38 L258.6 261.73 L258.9 262.25 L259.2 262.94 L259.5 263.78 L259.8 264.78 L260.1 265.9 L260.4 267.13 L260.7 268.46 L261 269.86 L261.3 271.31 L261.6 272.78 L261.9 274.26 L262.2 275.7 L262.5 277.09 L262.8 278.4 L263.1 279.57 L263.4 280.59 L263.7 281.38 L264 281.8 L264.3 281.34 L264.6 280.53 L264.9 279.5 L265.2 278.31 L265.5 277 L265.8 275.61 L266.1 274.16 L266.4 272.68 L266.7 271.21 L267 269.76 L267.3 268.37 L267.6 267.05 L267.9 265.82 L268.2 264.71 L268.5 263.72 L268.8 262.89 L269.1 262.21 L269.4 261.7 L269.7 261.36 L270 261.21 L270.3 261.24 L270.6 261.45 L270.9 261.85 L271.2 262.42 L271.5 263.15 L271.8 264.04 L272.1 265.06 L272.4 266.22 L272.7 267.48 L273 268.83 L273.3 270.24 L273.6 271.7 L273.9 273.18 L274.2 274.65 L274.5 276.08 L274.8 277.45 L275.1 278.72 L275.4 279.86 L275.7 280.83 L276 281.54 L276.3 281.73 L276.6 281.15 L276.9 280.27 L277.2 279.2 L277.5 277.97 L277.8 276.64 L278.1 275.23 L278.4 273.77 L278.7 272.29 L279 270.82" fill="none" stroke="#d2c21e" stroke-width="0.7" stroke-linejoin="round"/>
<text x="134.6" y="302.95" transform="matrix(1 .0005 0 1 0 -0.0673)" font-size="5.2" fill="#fff" stroke="#fff" font-weight="bold">0.000 s</text>
<text x="134.6" y="308.85" transform="matrix(1 .0005 0 1 0 -0.0673)" font-size="5.2" fill="#fff" stroke="#fff" font-weight="bold">Info BW 5.0050 MHz</text>
<text x="200.1" y="308.85" transform="matrix(1 .0005 0 1 0 -0.1001)" font-size="5.2" fill="#fff" stroke="#fff" font-weight="bold">Meas Time 1.000 ms</text>
<rect x="133.4" y="310.3" width="166.6" height="15.4" fill="#1c1c1c"/>
<rect x="133.4" y="309.8" width="166.6" height="1" fill="#2c88b6"/>
<rect x="134.2" y="311.9" width="14" height="12.6" fill="#222" stroke="#3e3e3e" stroke-width="0.7" rx="0.8"/>
<path d="M136.5 315.3 l4.0 -0.55 v3.45 h-4.0z M141 314.7 l5.0 -0.7 v4.2 h-5.0z M136.5 318.7 h4.0 v3.1 l-4.0 -0.55z M141 318.7 h5.0 v3.9 l-5.0 -0.7z" fill="#fff"/>
<rect x="151.1" y="311.9" width="13.6" height="12.6" fill="#222" stroke="#3e3e3e" stroke-width="0.7" rx="0.8"/>
<path d="M155.7 316.5 q4.8 -1.2 5.6 2.6 q0.3 2.4 -1.2 4.2" fill="none" stroke="#fff" stroke-width="1.7"/>
<path d="M152.7 314.7 l4.8 -0.7 l-3.3 4.4z" fill="#fff"/>
<rect x="167.5" y="311.9" width="13.5" height="12.6" fill="#222" stroke="#3e3e3e" stroke-width="0.7" rx="0.8"/>
<path d="M176.45 316.5 q-4.8 -1.2 -5.6 2.6 q-0.3 2.4 1.2 4.2" fill="none" stroke="#8a8a8a" stroke-width="1.7"/>
<path d="M179.45 314.7 l-4.8 -0.7 l3.3 4.4z" fill="#8a8a8a"/>
<rect x="183.9" y="311.9" width="13.7" height="12.6" fill="#222" stroke="#3e3e3e" stroke-width="0.7" rx="0.8"/>
<path d="M185.85 322.1 v-7.6 h4.3 l1.0 1.4 h4.5 v6.2z" fill="#fff"/>
<rect x="200.4" y="311.9" width="13.5" height="12.6" fill="#222" stroke="#3e3e3e" stroke-width="0.7" rx="0.8"/>
<text x="207.15" y="322.69" transform="matrix(1 .0005 0 1 0 -0.1036)" font-size="11.8" fill="#fff" stroke="#fff" text-anchor="middle" font-weight="bold">?</text>
</g>
<g id="w3">
<rect x="280.5" y="107" width="236.2" height="74.2" fill="#000"/>
<rect x="280.5" y="107" width="148.5" height="15.3" fill="#171717"/>
<path d="M280.5 122.4 V108.6 q0 -1.6 1.6 -1.6 H349.9 q1.6 0 1.6 1.6 V122.4z" fill="#3ba9dc"/>
<text x="282.3" y="112.95" transform="matrix(1 .0005 0 1 0 -0.1411)" font-size="5.2" fill="#0c2c3e" stroke="#0c2c3e">Spectrum Analyzer 2</text>
<text x="282.3" y="120.25" transform="matrix(1 .0005 0 1 0 -0.1411)" font-size="5.2" fill="#0c2c3e" stroke="#0c2c3e">Swept SA</text>
<path d="M348.05 113.7 h2.3 l-1.15 2.6 z" fill="#0a1a22"/>
<rect x="412.3" y="108.2" width="13.2" height="12.3" fill="#1c1c1c" stroke="#484848" stroke-width="0.7" rx="0.8"/>
<line x1="415.5" y1="114.35" x2="422.3" y2="114.35" stroke="#fff" stroke-width="1.05"/>
<line x1="418.9" y1="110.95" x2="418.9" y2="117.75" stroke="#fff" stroke-width="1.05"/>
<line x1="427.3" y1="107" x2="427.3" y2="122.3" stroke="#585858" stroke-width="0.6"/>
<rect x="428.8" y="108.2" width="13.8" height="12.3" fill="#1c1c1c" stroke="#484848" stroke-width="0.7" rx="0.8"/>
<path d="M440.33 113.54 L440.33 115.16 L439.1 115.17 L438.68 116.18 L439.55 117.05 L438.4 118.2 L437.53 117.33 L436.52 117.75 L436.51 118.98 L434.89 118.98 L434.88 117.75 L433.87 117.33 L433 118.2 L431.85 117.05 L432.72 116.18 L432.3 115.17 L431.07 115.16 L431.07 113.54 L432.3 113.53 L432.72 112.52 L431.85 111.65 L433 110.5 L433.87 111.37 L434.88 110.95 L434.89 109.72 L436.51 109.72 L436.52 110.95 L437.53 111.37 L438.4 110.5 L439.55 111.65 L438.68 112.52 L439.1 113.53 Z M433.8 114.35 a1.9 1.9 0 1 0 3.8 0 a1.9 1.9 0 1 0 -3.8 0 Z" fill="#fff" fill-rule="evenodd"/>
<rect x="443.4" y="107" width="56.8" height="15.3" fill="#124866"/>
<text x="472.3" y="116.68" transform="matrix(1 .0005 0 1 0 -0.2361)" font-size="5.3" fill="#d2dee6" stroke="#d2dee6" text-anchor="middle">Sweep</text>
<path d="M495.45 113.8 h2.3 l-1.15 2.6 z" fill="#fff"/>
<rect x="500.2" y="107" width="16.5" height="15.4" fill="#0c0c0c"/>
<rect x="501.7" y="108.2" width="14.3" height="13.1" fill="#141414" stroke="#3a3a3a" stroke-width="0.7" rx="0.6"/>
<line x1="508.85" y1="111.95" x2="508.85" y2="110.3" stroke="#22d422" stroke-width="0.9" stroke-linecap="round"/>
<line x1="510.83" y1="112.77" x2="512" y2="111.6" stroke="#18b018" stroke-width="0.9" stroke-linecap="round"/>
<line x1="511.65" y1="114.75" x2="513.3" y2="114.75" stroke="#20cc20" stroke-width="0.9" stroke-linecap="round"/>
<line x1="510.83" y1="116.73" x2="512" y2="117.9" stroke="#149a14" stroke-width="0.9" stroke-linecap="round"/>
<line x1="508.85" y1="117.55" x2="508.85" y2="119.2" stroke="#22d022" stroke-width="0.9" stroke-linecap="round"/>
<line x1="506.87" y1="116.73" x2="505.7" y2="117.9" stroke="#18b418" stroke-width="0.9" stroke-linecap="round"/>
<line x1="506.05" y1="114.75" x2="504.4" y2="114.75" stroke="#20cc20" stroke-width="0.9" stroke-linecap="round"/>
<line x1="506.87" y1="112.77" x2="505.7" y2="111.6" stroke="#18ac18" stroke-width="0.9" stroke-linecap="round"/>
<rect x="280.5" y="122.3" width="1.3" height="58.9" fill="#7a7a7a"/>
<rect x="282" y="123.4" width="58.2" height="10.5" fill="#2e2e2e" rx="0.8"/>
<text x="283.5" y="130.7" transform="matrix(1 .0005 0 1 0 -0.1418)" font-size="4.8" fill="#e0e0e0" stroke="#e0e0e0">1 Spectrum</text>
<path d="M336.75 127.75 h2.5 l-1.25 2.5 z" fill="#fff"/>
<text x="282" y="139.35" transform="matrix(1 .0005 0 1 0 -0.1410)" font-size="5.2" fill="#fff" stroke="#fff" font-weight="bold">Scale/Div 10 dB</text>
<text x="330" y="139.35" transform="matrix(1 .0005 0 1 0 -0.1650)" font-size="5.2" fill="#fff" stroke="#fff" font-weight="bold">Ref Level 0.00 dBm</text>
<text x="283" y="145.49" transform="matrix(1 .0005 0 1 0 -0.1415)" font-size="5.9" fill="#d0d0d0" stroke="#d0d0d0">Log</text>
<text x="294" y="149.98" transform="matrix(1 .0005 0 1 0 -0.1470)" font-size="4.6" fill="#9a9a9a" stroke="#9a9a9a" text-anchor="end" style="stroke-width:.06px">-10.0</text>
<text x="294" y="156.13" transform="matrix(1 .0005 0 1 0 -0.1470)" font-size="4.6" fill="#9a9a9a" stroke="#9a9a9a" text-anchor="end" style="stroke-width:.06px">-20.0</text>
<text x="294" y="162.28" transform="matrix(1 .0005 0 1 0 -0.1470)" font-size="4.6" fill="#9a9a9a" stroke="#9a9a9a" text-anchor="end" style="stroke-width:.06px">-30.0</text>
<text x="294" y="168.43" transform="matrix(1 .0005 0 1 0 -0.1470)" font-size="4.6" fill="#9a9a9a" stroke="#9a9a9a" text-anchor="end" style="stroke-width:.06px">-40.0</text>
<text x="294" y="174.58" transform="matrix(1 .0005 0 1 0 -0.1470)" font-size="4.6" fill="#9a9a9a" stroke="#9a9a9a" text-anchor="end" style="stroke-width:.06px">-50.0</text>
<text x="294" y="180.73" transform="matrix(1 .0005 0 1 0 -0.1470)" font-size="4.6" fill="#9a9a9a" stroke="#9a9a9a" text-anchor="end" style="stroke-width:.06px">-60.0</text>
<line x1="299.3" y1="142.1" x2="426.1" y2="142.1" stroke="#686868" stroke-width="0.55"/>
<line x1="299.3" y1="148.25" x2="426.1" y2="148.25" stroke="#686868" stroke-width="0.55"/>
<line x1="299.3" y1="154.4" x2="426.1" y2="154.4" stroke="#686868" stroke-width="0.55"/>
<line x1="299.3" y1="160.55" x2="426.1" y2="160.55" stroke="#686868" stroke-width="0.55"/>
<line x1="299.3" y1="166.7" x2="426.1" y2="166.7" stroke="#686868" stroke-width="0.55"/>
<line x1="299.3" y1="172.85" x2="426.1" y2="172.85" stroke="#686868" stroke-width="0.55"/>
<line x1="299.3" y1="179" x2="426.1" y2="179" stroke="#686868" stroke-width="0.55"/>
<line x1="299.3" y1="142.1" x2="299.3" y2="181.2" stroke="#686868" stroke-width="0.55"/>
<line x1="311.98" y1="142.1" x2="311.98" y2="181.2" stroke="#686868" stroke-width="0.55"/>
<line x1="324.66" y1="142.1" x2="324.66" y2="181.2" stroke="#686868" stroke-width="0.55"/>
<line x1="337.34" y1="142.1" x2="337.34" y2="181.2" stroke="#686868" stroke-width="0.55"/>
<line x1="350.02" y1="142.1" x2="350.02" y2="181.2" stroke="#686868" stroke-width="0.55"/>
<line x1="362.7" y1="142.1" x2="362.7" y2="181.2" stroke="#686868" stroke-width="0.55"/>
<line x1="375.38" y1="142.1" x2="375.38" y2="181.2" stroke="#686868" stroke-width="0.55"/>
<line x1="388.06" y1="142.1" x2="388.06" y2="181.2" stroke="#686868" stroke-width="0.55"/>
<line x1="400.74" y1="142.1" x2="400.74" y2="181.2" stroke="#686868" stroke-width="0.55"/>
<line x1="413.42" y1="142.1" x2="413.42" y2="181.2" stroke="#686868" stroke-width="0.55"/>
<line x1="426.1" y1="142.1" x2="426.1" y2="181.2" stroke="#686868" stroke-width="0.55"/>
<defs><linearGradient id="cb" x1="0" y1="0" x2="0" y2="1"><stop offset="0" stop-color="#f01010"/><stop offset="0.22" stop-color="#ff7a10"/><stop offset="0.42" stop-color="#f8f010"/><stop offset="0.62" stop-color="#60e020"/><stop offset="0.85" stop-color="#08f040"/><stop offset="1" stop-color="#00f844"/></linearGradient></defs>
<rect x="295.2" y="142.1" width="4.1" height="39.1" fill="url(#cb)"/>
<path d="M363 180.6 L364.2 180.2 L364.7 166 L365.4 160.9 L366.1 166 L366.6 180.2 L367.8 180.6" fill="none" stroke="#c9b91c" stroke-width="0.7" stroke-linejoin="round"/>
<rect x="426.4" y="122.3" width="1" height="58.9" fill="#666"/>
<rect x="427.4" y="122.3" width="1.3" height="58.9" fill="#141414"/>
<rect x="428.6" y="122.3" width="14.7" height="1.4" fill="#1c1c1c"/>
<rect x="443.3" y="122.3" width="73.4" height="1.4" fill="#124866"/>
<rect x="428.6" y="123.6" width="57" height="57.6" fill="#3ab0e0"/>
<rect x="485.6" y="123.6" width="31.1" height="57.6" fill="#124866"/>
<rect x="430.5" y="125.2" width="53.5" height="30.1" fill="#4a4a4a" stroke="#3a3a3a" stroke-width="0.5" rx="0.8"/>
<text x="431.3" y="130.85" transform="matrix(1 .0005 0 1 0 -0.2157)" font-size="5.2" fill="#f4f4f4" stroke="#f4f4f4">Sweep Time</text>
<text x="433" y="138.15" transform="matrix(1 .0005 0 1 0 -0.2165)" font-size="5.2" fill="#f4f4f4" stroke="#f4f4f4">1.00 ms</text>
<line x1="430.8" y1="140.2" x2="483.8" y2="140.2" stroke="#3a3a3a" stroke-width="0.6"/>
<rect x="431.2" y="143" width="8.5" height="5.3" fill="#2b95cc"/>
<line x1="431.2" y1="145.65" x2="439.7" y2="145.65" stroke="#175a80" stroke-width="0.7"/>
<text x="442" y="147.65" transform="matrix(1 .0005 0 1 0 -0.2210)" font-size="5.2" fill="#f4f4f4" stroke="#f4f4f4">Auto</text>
<rect x="432" y="149" width="6.6" height="5.1" fill="#2a2a2a"/>
<text x="442" y="153.15" transform="matrix(1 .0005 0 1 0 -0.2210)" font-size="5.2" fill="#f4f4f4" stroke="#f4f4f4">Man</text>
<rect x="430.5" y="158.4" width="53.5" height="19.1" fill="#4a4a4a" stroke="#3a3a3a" stroke-width="0.5" rx="0.8"/>
<text x="431.3" y="163.15" transform="matrix(1 .0005 0 1 0 -0.2157)" font-size="5.2" fill="#f4f4f4" stroke="#f4f4f4">Sweep / Measure</text>
<rect x="431.5" y="164.8" width="8.5" height="5.3" fill="#2b95cc"/>
<line x1="431.5" y1="167.45" x2="440" y2="167.45" stroke="#175a80" stroke-width="0.7"/>
<text x="442.3" y="169.45" transform="matrix(1 .0005 0 1 0 -0.2212)" font-size="5.2" fill="#f4f4f4" stroke="#f4f4f4">Continuous</text>
<rect x="432.7" y="171" width="6.3" height="5.3" fill="#2a2a2a"/>
<text x="442.5" y="175.25" transform="matrix(1 .0005 0 1 0 -0.2213)" font-size="5.2" fill="#f4f4f4" stroke="#f4f4f4">Single</text>
<rect x="432.9" y="180.2" width="48.7" height="1" fill="#2a2a2a" rx="0.6"/>
<rect x="484" y="124.8" width="31.8" height="12.6" fill="#3ab0e0" rx="1.2"/>
<text x="488" y="129.81" transform="matrix(1 .0005 0 1 0 -0.2440)" font-size="5.1" fill="#0c2c3e" stroke="#0c2c3e">Sweep/</text>
<text x="488" y="135.61" transform="matrix(1 .0005 0 1 0 -0.2440)" font-size="5.1" fill="#0c2c3e" stroke="#0c2c3e">Control</text>
<rect x="486.5" y="140.5" width="29.7" height="12.7" fill="#343434" rx="1.2"/>
<text x="488" y="145.68" transform="matrix(1 .0005 0 1 0 -0.2440)" font-size="5" fill="#f4f4f4" stroke="#f4f4f4">Sweep</text>
<text x="488" y="151.28" transform="matrix(1 .0005 0 1 0 -0.2440)" font-size="5" fill="#f4f4f4" stroke="#f4f4f4">Config</text>
</g>
<g id="w4">
<rect x="224.9" y="180.9" width="393" height="220.6" fill="#000"/>
<rect x="224.9" y="180.9" width="303.4" height="15.4" fill="#171717"/>
<rect x="224.9" y="181.1" width="70.1" height="15.2" fill="#3ba9dc"/>
<text x="226.2" y="187.65" transform="matrix(1 .0005 0 1 0 -0.1131)" font-size="5.2" fill="#0c2c3e" stroke="#0c2c3e">5G NR 1</text>
<text x="226.2" y="193.15" transform="matrix(1 .0005 0 1 0 -0.1131)" font-size="5.2" fill="#0c2c3e" stroke="#0c2c3e">Modulation Analysis</text>
<path d="M291.45 186.9 h2.3 l-1.15 2.6 z" fill="#0a1a22"/>
<rect x="297.4" y="182.3" width="13.5" height="12.7" fill="#1c1c1c" stroke="#484848" stroke-width="0.7" rx="0.8"/>
<line x1="300.45" y1="188.65" x2="307.85" y2="188.65" stroke="#fff" stroke-width="1.45"/>
<line x1="304.15" y1="184.95" x2="304.15" y2="192.35" stroke="#fff" stroke-width="1.45"/>
<rect x="528.5" y="181.8" width="13.5" height="13" fill="#1c1c1c" stroke="#484848" stroke-width="0.7" rx="0.8"/>
<path d="M539.88 187.49 L539.88 189.11 L538.65 189.12 L538.23 190.13 L539.1 191 L537.95 192.15 L537.08 191.28 L536.07 191.7 L536.06 192.93 L534.44 192.93 L534.43 191.7 L533.42 191.28 L532.55 192.15 L531.4 191 L532.27 190.13 L531.85 189.12 L530.62 189.11 L530.62 187.49 L531.85 187.48 L532.27 186.47 L531.4 185.6 L532.55 184.45 L533.42 185.32 L534.43 184.9 L534.44 183.67 L536.06 183.67 L536.07 184.9 L537.08 185.32 L537.95 184.45 L539.1 185.6 L538.23 186.47 L538.65 187.48 Z M533.35 188.3 a1.9 1.9 0 1 0 3.8 0 a1.9 1.9 0 1 0 -3.8 0 Z" fill="#fff" fill-rule="evenodd"/>
<rect x="542.3" y="180.9" width="59.9" height="15.4" fill="#124866"/>
<text x="573.2" y="189.78" transform="matrix(1 .0005 0 1 0 -0.2866)" font-size="5.3" fill="#d2dee6" stroke="#d2dee6" text-anchor="middle">Meas Setup</text>
<path d="M596.65 186.9 h2.3 l-1.15 2.6 z" fill="#fff"/>
<rect x="602.2" y="180.9" width="15.7" height="15.4" fill="#0c0c0c"/>
<rect x="603.4" y="182.3" width="13.8" height="12.6" fill="#141414" stroke="#3a3a3a" stroke-width="0.7" rx="0.6"/>
<line x1="610.3" y1="185.8" x2="610.3" y2="184.15" stroke="#22d422" stroke-width="0.9" stroke-linecap="round"/>
<line x1="612.28" y1="186.62" x2="613.45" y2="185.45" stroke="#18b018" stroke-width="0.9" stroke-linecap="round"/>
<line x1="613.1" y1="188.6" x2="614.75" y2="188.6" stroke="#20cc20" stroke-width="0.9" stroke-linecap="round"/>
<line x1="612.28" y1="190.58" x2="613.45" y2="191.75" stroke="#149a14" stroke-width="0.9" stroke-linecap="round"/>
<line x1="610.3" y1="191.4" x2="610.3" y2="193.05" stroke="#22d022" stroke-width="0.9" stroke-linecap="round"/>
<line x1="608.32" y1="190.58" x2="607.15" y2="191.75" stroke="#18b418" stroke-width="0.9" stroke-linecap="round"/>
<line x1="607.5" y1="188.6" x2="605.85" y2="188.6" stroke="#20cc20" stroke-width="0.9" stroke-linecap="round"/>
<line x1="608.32" y1="186.62" x2="607.15" y2="185.45" stroke="#18ac18" stroke-width="0.9" stroke-linecap="round"/>
<rect x="224.9" y="196.3" width="302.4" height="24.6" fill="#4c4c4c"/>
<line x1="262.8" y1="196.3" x2="262.8" y2="220.9" stroke="#5e5e5e" stroke-width="0.6"/>
<line x1="307.6" y1="196.3" x2="307.6" y2="220.9" stroke="#5e5e5e" stroke-width="0.6"/>
<line x1="351.5" y1="196.3" x2="351.5" y2="220.9" stroke="#5e5e5e" stroke-width="0.6"/>
<line x1="396.7" y1="196.3" x2="396.7" y2="220.9" stroke="#5e5e5e" stroke-width="0.6"/>
<line x1="440.4" y1="196.3" x2="440.4" y2="220.9" stroke="#5e5e5e" stroke-width="0.6"/>
<rect x="224.9" y="196.3" width="37.9" height="6.7" fill="#3a3a3a"/>
<text x="226.2" y="202.77" transform="matrix(1 .0005 0 1 0 -0.1131)" font-size="6.95" fill="#fff" stroke="#fff" font-weight="bold">KEYSIGHT</text>
<text x="232" y="209.68" transform="matrix(1 .0005 0 1 0 -0.1160)" font-size="5" fill="#f0f0f0" stroke="#f0f0f0" text-anchor="middle" font-weight="bold">L</text>
<rect x="247.4" y="205.9" width="10.4" height="4.3" fill="none" stroke="#e8e8e8" stroke-width="0.7" rx="1.3"/>
<path d="M250.7 208.4 l3.8 2 l-3.8 2z" fill="#fff" stroke="#4c4c4c" stroke-width="0.4"/>
<rect x="224.9" y="215.2" width="9.1" height="5.7" fill="#1fa64d"/>
<text x="229.2" y="219.76" transform="matrix(1 .0005 0 1 0 -0.1146)" font-size="4.4" fill="#0a3a18" stroke="#0a3a18" text-anchor="middle" font-weight="bold" font-style="italic">LXI</text>
<text x="264.3" y="201.22" transform="matrix(1 .0005 0 1 0 -0.1322)" font-size="4.85" fill="#e4e4e4" stroke="#e4e4e4">Input: RF</text>
<text x="264.3" y="207.07" transform="matrix(1 .0005 0 1 0 -0.1322)" font-size="4.85" fill="#e4e4e4" stroke="#e4e4e4">Coupling: AC</text>
<text x="264.3" y="212.92" transform="matrix(1 .0005 0 1 0 -0.1322)" font-size="4.85" fill="#d8b826" stroke="#d8b826">Align: Off</text>
<text x="308.7" y="201.22" transform="matrix(1 .0005 0 1 0 -0.1543)" font-size="4.85" fill="#e4e4e4" stroke="#e4e4e4">Input Z: 50 Ω</text>
<text x="308.7" y="207.07" transform="matrix(1 .0005 0 1 0 -0.1543)" font-size="4.85" fill="#e4e4e4" stroke="#e4e4e4">Corrections: Off</text>
<text x="308.7" y="212.92" transform="matrix(1 .0005 0 1 0 -0.1543)" font-size="4.85" fill="#e4e4e4" stroke="#e4e4e4">Freq Ref: Ext (S)</text>
<text x="308.7" y="218.77" transform="matrix(1 .0005 0 1 0 -0.1543)" font-size="4.85" fill="#e4e4e4" stroke="#e4e4e4">NFE: Off</text>
<text x="352.7" y="201.22" transform="matrix(1 .0005 0 1 0 -0.1764)" font-size="4.85" fill="#e4e4e4" stroke="#e4e4e4">Atten: 10 dB</text>
<text x="352.7" y="207.07" transform="matrix(1 .0005 0 1 0 -0.1764)" font-size="4.85" fill="#e4e4e4" stroke="#e4e4e4">Preamp: Off</text>
<text x="352.7" y="212.92" transform="matrix(1 .0005 0 1 0 -0.1764)" font-size="4.85" fill="#e4e4e4" stroke="#e4e4e4">µW Path: Standard</text>
<text x="352.7" y="218.77" transform="matrix(1 .0005 0 1 0 -0.1764)" font-size="4.85" fill="#e4e4e4" stroke="#e4e4e4">#PNO: Best Wide</text>
<text x="397.4" y="201.22" transform="matrix(1 .0005 0 1 0 -0.1987)" font-size="4.85" fill="#e4e4e4" stroke="#e4e4e4">Trig: External 1</text>
<text x="397.4" y="207.07" transform="matrix(1 .0005 0 1 0 -0.1987)" font-size="4.85" fill="#e4e4e4" stroke="#e4e4e4">#IF Gain: Low</text>
<text x="441.1" y="201.22" transform="matrix(1 .0005 0 1 0 -0.2206)" font-size="4.85" fill="#e4e4e4" stroke="#e4e4e4">Carrier Ref Freq: 3.600000000 GHz</text>
<text x="441.1" y="207.07" transform="matrix(1 .0005 0 1 0 -0.2206)" font-size="4.85" fill="#e4e4e4" stroke="#e4e4e4">CC Info: Downlink, 1 CC</text>
<rect x="525.6" y="221.3" width="2.6" height="165.4" fill="#2a2a2a"/>
<rect x="526" y="221.3" width="1" height="165.4" fill="#5a5a5a"/>
<rect x="528.2" y="196.3" width="89.7" height="19" fill="#124866"/>
<line x1="528.2" y1="196.6" x2="617.9" y2="196.6" stroke="#1f6488" stroke-width="0.6"/>
<line x1="528.2" y1="215.1" x2="617.9" y2="215.1" stroke="#1f6488" stroke-width="0.6"/>
<rect x="528" y="215.4" width="59.4" height="186.1" fill="#3ab0e0"/>
<rect x="587.4" y="215.4" width="30.5" height="186.1" fill="#124866"/>
<rect x="529.9" y="218" width="55.1" height="16.6" fill="#484848" stroke="#333" stroke-width="0.6" rx="0.8"/>
<text x="530.6" y="222.96" transform="matrix(1 .0005 0 1 0 -0.2653)" font-size="5.25" fill="#f4f4f4" stroke="#f4f4f4">Directio</text>
<text x="531.6" y="230.96" transform="matrix(1 .0005 0 1 0 -0.2658)" font-size="5.25" fill="#f4f4f4" stroke="#f4f4f4">Downlink</text>
<path d="M581.35 227.85 h2.5 l-1.25 2.7 z" fill="#fff"/>
<rect x="587.8" y="217.5" width="30.1" height="12.3" fill="#2c2c2c" rx="0.8"/>
<text x="589" y="225.43" transform="matrix(1 .0005 0 1 0 -0.2945)" font-size="5" fill="#f4f4f4" stroke="#f4f4f4">Settings</text>
<rect x="586" y="233.5" width="31.9" height="12.7" fill="#3ab0e0" rx="0.8"/>
<text x="589" y="241.62" transform="matrix(1 .0005 0 1 0 -0.2945)" font-size="5" fill="#0c2c3e" stroke="#0c2c3e">Radio</text>
<rect x="587.8" y="249.5" width="30.1" height="12.3" fill="#2c2c2c" rx="0.8"/>
<text x="589" y="254.62" transform="matrix(1 .0005 0 1 0 -0.2945)" font-size="5" fill="#f4f4f4" stroke="#f4f4f4">Component</text>
<text x="589" y="260.22" transform="matrix(1 .0005 0 1 0 -0.2945)" font-size="5" fill="#f4f4f4" stroke="#f4f4f4">Carriers</text>
<rect x="587.8" y="265.4" width="30.1" height="12.3" fill="#2c2c2c" rx="0.8"/>
<text x="589" y="273.32" transform="matrix(1 .0005 0 1 0 -0.2945)" font-size="5" fill="#f4f4f4" stroke="#f4f4f4">Meas Time</text>
<rect x="587.8" y="281.5" width="30.1" height="12.2" fill="#2c2c2c" rx="0.8"/>
<text x="589" y="289.38" transform="matrix(1 .0005 0 1 0 -0.2945)" font-size="5" fill="#f4f4f4" stroke="#f4f4f4">Advanced</text>
<rect x="587.8" y="297.4" width="30.1" height="12.8" fill="#2c2c2c" rx="0.8"/>
<text x="589" y="302.77" transform="matrix(1 .0005 0 1 0 -0.2945)" font-size="5" fill="#f4f4f4" stroke="#f4f4f4">Channel</text>
<text x="589" y="308.37" transform="matrix(1 .0005 0 1 0 -0.2945)" font-size="5" fill="#f4f4f4" stroke="#f4f4f4">Profile</text>
<rect x="226" y="222.4" width="59.8" height="10.5" fill="#2e2e2e" rx="0.8"/>
<text x="227.2" y="226.64" transform="matrix(1 .0005 0 1 0 -0.1136)" font-size="4.9" fill="#e0e0e0" stroke="#e0e0e0">1 CC0-DL_BWP1 IQ</text>
<text x="227.2" y="232.14" transform="matrix(1 .0005 0 1 0 -0.1136)" font-size="4.9" fill="#e0e0e0" stroke="#e0e0e0">Time</text>
<path d="M282.35 226.4 h2.5 l-1.25 2.5 z" fill="#fff"/>
<text x="226.8" y="237.18" transform="matrix(1 .0005 0 1 0 -0.1134)" font-size="5" fill="#e0e0e0" stroke="#e0e0e0">I-Q</text>
<text x="240.6" y="242.22" transform="matrix(1 .0005 0 1 0 -0.1203)" font-size="4.85" fill="#9a9a9a" stroke="#9a9a9a" text-anchor="end" style="stroke-width:.06px">1.17</text>
<text x="242.2" y="248.72" transform="matrix(1 .0005 0 1 0 -0.1211)" font-size="4.85" fill="#9a9a9a" stroke="#9a9a9a" text-anchor="end" style="stroke-width:.06px">881 m</text>
<text x="242.2" y="254.92" transform="matrix(1 .0005 0 1 0 -0.1211)" font-size="4.85" fill="#9a9a9a" stroke="#9a9a9a" text-anchor="end" style="stroke-width:.06px">587 m</text>
<text x="242.2" y="261.22" transform="matrix(1 .0005 0 1 0 -0.1211)" font-size="4.85" fill="#9a9a9a" stroke="#9a9a9a" text-anchor="end" style="stroke-width:.06px">294 m</text>
<text x="240.6" y="267.62" transform="matrix(1 .0005 0 1 0 -0.1203)" font-size="4.85" fill="#9a9a9a" stroke="#9a9a9a" text-anchor="end" style="stroke-width:.06px">0</text>
<text x="242.2" y="273.92" transform="matrix(1 .0005 0 1 0 -0.1211)" font-size="4.85" fill="#9a9a9a" stroke="#9a9a9a" text-anchor="end" style="stroke-width:.06px">-294 m</text>
<text x="242.2" y="280.22" transform="matrix(1 .0005 0 1 0 -0.1211)" font-size="4.85" fill="#9a9a9a" stroke="#9a9a9a" text-anchor="end" style="stroke-width:.06px">-587 m</text>
<text x="242.2" y="286.32" transform="matrix(1 .0005 0 1 0 -0.1211)" font-size="4.85" fill="#9a9a9a" stroke="#9a9a9a" text-anchor="end" style="stroke-width:.06px">-881 m</text>
<text x="240.6" y="292.52" transform="matrix(1 .0005 0 1 0 -0.1203)" font-size="4.85" fill="#9a9a9a" stroke="#9a9a9a" text-anchor="end" style="stroke-width:.06px">-1.17</text>
<rect x="243.6" y="234.5" width="131.4" height="62.1" fill="none" stroke="#6a6a6a" stroke-width="0.6"/>
<defs><pattern id="qam" x="281.04" y="238.43" width="3.527" height="3.333" patternUnits="userSpaceOnUse"><rect width="3.527" height="3.333" fill="#101014"/><rect x="-0.35" y="0.75" width="0.7" height="1.85" fill="#a2a2a8"/><rect x="3.177" y="0.75" width="0.7" height="1.85" fill="#a2a2a8"/><rect x="0.8" y="-0.33" width="1.95" height="0.66" fill="#a2a2a8"/><rect x="0.8" y="3.0" width="1.95" height="0.66" fill="#a2a2a8"/><rect x="0.6" y="0.55" width="2.33" height="2.23" fill="#0c0cb8"/></pattern></defs>
<rect x="281.04" y="238.43" width="56.43" height="53.33" fill="url(#qam)"/>
<rect x="280.6" y="238" width="1" height="54.2" fill="#000"/>
<rect x="336.97" y="238" width="1.1" height="54.2" fill="#000"/>
<circle cx="292.9" cy="250.2" r="0.75" fill="#a0a0b8"/>
<circle cx="325.4" cy="250.2" r="0.75" fill="#a0a0b8"/>
<circle cx="292.9" cy="280.3" r="0.75" fill="#a0a0b8"/>
<circle cx="325.4" cy="280.3" r="0.75" fill="#a0a0b8"/>
<text x="226.5" y="302.15" transform="matrix(1 .0005 0 1 0 -0.1133)" font-size="5.2" fill="#fff" stroke="#fff" font-weight="bold">-2.881</text>
<text x="374" y="302.15" transform="matrix(1 .0005 0 1 0 -0.1870)" font-size="5.2" fill="#fff" stroke="#fff" text-anchor="end" font-weight="bold">2.881</text>
<rect x="224.9" y="220.8" width="151" height="1.1" fill="#339fc8"/>
<rect x="224.9" y="220.8" width="1.1" height="83.4" fill="#339fc8"/>
<rect x="374.8" y="220.8" width="1.1" height="83.4" fill="#339fc8"/>
<rect x="224.9" y="303.2" width="151" height="1" fill="#339fc8"/>
<rect x="376.6" y="222.2" width="60.1" height="11.3" fill="#2a2a2a" rx="0.8"/>
<text x="377.8" y="229" transform="matrix(1 .0005 0 1 0 -0.1889)" font-size="4.78" fill="#e0e0e0" stroke="#e0e0e0">2 CC0 Frame Summary</text>
<path d="M433.25 226.05 h2.5 l-1.25 2.5 z" fill="#fff"/>
<rect x="436.6" y="233.5" width="21.1" height="6.2" fill="#333" stroke="#444" stroke-width="0.4"/>
<text x="447.15" y="238.58" transform="matrix(1 .0005 0 1 0 -0.2236)" font-size="5.3" fill="#e6e6e6" stroke="#e6e6e6" text-anchor="middle">Evm</text>
<rect x="457.7" y="233.5" width="33.9" height="6.2" fill="#333" stroke="#444" stroke-width="0.4"/>
<text x="474.65" y="238.58" transform="matrix(1 .0005 0 1 0 -0.2373)" font-size="5.3" fill="#e6e6e6" stroke="#e6e6e6" text-anchor="middle">Power</text>
<rect x="491.6" y="233.5" width="23.1" height="6.2" fill="#333" stroke="#444" stroke-width="0.4"/>
<text x="503.15" y="238.58" transform="matrix(1 .0005 0 1 0 -0.2516)" font-size="5.3" fill="#e6e6e6" stroke="#e6e6e6" text-anchor="middle">Num RB</text>
<rect x="376.6" y="240.1" width="60" height="6.28" fill="#272727" stroke="#1a1a1a" stroke-width="0.3"/>
<text x="377.6" y="245.16" transform="matrix(1 .0005 0 1 0 -0.1888)" font-size="5.4" fill="#f0f0f0" stroke="#f0f0f0">PSS (30 kHz)</text>
<rect x="436.6" y="240.1" width="21.1" height="6.28" fill="#000" stroke="#333" stroke-width="0.5"/>
<text x="447.15" y="245.16" transform="matrix(1 .0005 0 1 0 -0.2236)" font-size="5.4" fill="#f0f0f0" stroke="#f0f0f0" text-anchor="middle">0.41 %</text>
<rect x="457.7" y="240.1" width="33.9" height="6.28" fill="#000" stroke="#333" stroke-width="0.5"/>
<text x="474.65" y="245.16" transform="matrix(1 .0005 0 1 0 -0.2373)" font-size="5.4" fill="#f0f0f0" stroke="#f0f0f0" text-anchor="middle">-45.65 dBm</text>
<rect x="491.6" y="240.1" width="23.1" height="6.28" fill="#000" stroke="#333" stroke-width="0.5"/>
<text x="503.15" y="245.16" transform="matrix(1 .0005 0 1 0 -0.2516)" font-size="5.4" fill="#f0f0f0" stroke="#f0f0f0" text-anchor="middle">44</text>
<rect x="376.6" y="246.38" width="60" height="6.28" fill="#272727" stroke="#1a1a1a" stroke-width="0.3"/>
<text x="377.6" y="251.44" transform="matrix(1 .0005 0 1 0 -0.1888)" font-size="5.4" fill="#f0f0f0" stroke="#f0f0f0">SSS (30 kHz)</text>
<rect x="436.6" y="246.38" width="21.1" height="6.28" fill="#000" stroke="#333" stroke-width="0.5"/>
<text x="447.15" y="251.44" transform="matrix(1 .0005 0 1 0 -0.2236)" font-size="5.4" fill="#f0f0f0" stroke="#f0f0f0" text-anchor="middle">0.40 %</text>
<rect x="457.7" y="246.38" width="33.9" height="6.28" fill="#000" stroke="#333" stroke-width="0.5"/>
<text x="474.65" y="251.44" transform="matrix(1 .0005 0 1 0 -0.2373)" font-size="5.4" fill="#f0f0f0" stroke="#f0f0f0" text-anchor="middle">-45.65 dBm</text>
<rect x="491.6" y="246.38" width="23.1" height="6.28" fill="#000" stroke="#333" stroke-width="0.5"/>
<text x="503.15" y="251.44" transform="matrix(1 .0005 0 1 0 -0.2516)" font-size="5.4" fill="#f0f0f0" stroke="#f0f0f0" text-anchor="middle">44</text>
<rect x="376.6" y="252.66" width="60" height="6.28" fill="#272727" stroke="#1a1a1a" stroke-width="0.3"/>
<text x="377.6" y="257.72" transform="matrix(1 .0005 0 1 0 -0.1888)" font-size="5.4" fill="#f0f0f0" stroke="#f0f0f0">PBCH (30 kHz)</text>
<rect x="436.6" y="252.66" width="21.1" height="6.28" fill="#000" stroke="#333" stroke-width="0.5"/>
<text x="447.15" y="257.72" transform="matrix(1 .0005 0 1 0 -0.2236)" font-size="5.4" fill="#f0f0f0" stroke="#f0f0f0" text-anchor="middle">0.32 %</text>
<rect x="457.7" y="252.66" width="33.9" height="6.28" fill="#000" stroke="#333" stroke-width="0.5"/>
<text x="474.65" y="257.72" transform="matrix(1 .0005 0 1 0 -0.2373)" font-size="5.4" fill="#f0f0f0" stroke="#f0f0f0" text-anchor="middle">-45.65 dBm</text>
<rect x="491.6" y="252.66" width="23.1" height="6.28" fill="#000" stroke="#333" stroke-width="0.5"/>
<text x="503.15" y="257.72" transform="matrix(1 .0005 0 1 0 -0.2516)" font-size="5.4" fill="#f0f0f0" stroke="#f0f0f0" text-anchor="middle">80</text>
<rect x="376.6" y="258.94" width="60" height="6.28" fill="#272727" stroke="#1a1a1a" stroke-width="0.3"/>
<text x="377.6" y="264" transform="matrix(1 .0005 0 1 0 -0.1888)" font-size="5.4" fill="#f0f0f0" stroke="#f0f0f0">PBCH DMRS (30 kHz)</text>
<rect x="436.6" y="258.94" width="21.1" height="6.28" fill="#000" stroke="#333" stroke-width="0.5"/>
<text x="447.15" y="264" transform="matrix(1 .0005 0 1 0 -0.2236)" font-size="5.4" fill="#f0f0f0" stroke="#f0f0f0" text-anchor="middle">0.42 %</text>
<rect x="457.7" y="258.94" width="33.9" height="6.28" fill="#000" stroke="#333" stroke-width="0.5"/>
<text x="474.65" y="264" transform="matrix(1 .0005 0 1 0 -0.2373)" font-size="5.4" fill="#f0f0f0" stroke="#f0f0f0" text-anchor="middle">-45.65 dBm</text>
<rect x="491.6" y="258.94" width="23.1" height="6.28" fill="#000" stroke="#333" stroke-width="0.5"/>
<text x="503.15" y="264" transform="matrix(1 .0005 0 1 0 -0.2516)" font-size="5.4" fill="#f0f0f0" stroke="#f0f0f0" text-anchor="middle">80</text>
<rect x="376.6" y="265.22" width="60" height="6.28" fill="#272727" stroke="#1a1a1a" stroke-width="0.3"/>
<text x="377.6" y="270.28" transform="matrix(1 .0005 0 1 0 -0.1888)" font-size="5.4" fill="#f0f0f0" stroke="#f0f0f0">PDSCH (BWP1)</text>
<rect x="436.6" y="265.22" width="21.1" height="6.28" fill="#000" stroke="#333" stroke-width="0.5"/>
<text x="447.15" y="270.28" transform="matrix(1 .0005 0 1 0 -0.2236)" font-size="5.4" fill="#f0f0f0" stroke="#f0f0f0" text-anchor="middle">0.64 %</text>
<rect x="457.7" y="265.22" width="33.9" height="6.28" fill="#000" stroke="#333" stroke-width="0.5"/>
<text x="474.65" y="270.28" transform="matrix(1 .0005 0 1 0 -0.2373)" font-size="5.4" fill="#f0f0f0" stroke="#f0f0f0" text-anchor="middle">-45.63 dBm</text>
<rect x="491.6" y="265.22" width="23.1" height="6.28" fill="#000" stroke="#333" stroke-width="0.5"/>
<text x="503.15" y="270.28" transform="matrix(1 .0005 0 1 0 -0.2516)" font-size="5.4" fill="#f0f0f0" stroke="#f0f0f0" text-anchor="middle">546</text>
<rect x="376.6" y="271.5" width="60" height="6.28" fill="#272727" stroke="#1a1a1a" stroke-width="0.3"/>
<text x="377.6" y="276.56" transform="matrix(1 .0005 0 1 0 -0.1888)" font-size="5.4" fill="#f0f0f0" stroke="#f0f0f0">PDSCH DMRS (BWP1)</text>
<rect x="436.6" y="271.5" width="21.1" height="6.28" fill="#000" stroke="#333" stroke-width="0.5"/>
<text x="447.15" y="276.56" transform="matrix(1 .0005 0 1 0 -0.2236)" font-size="5.4" fill="#f0f0f0" stroke="#f0f0f0" text-anchor="middle">0.64 %</text>
<rect x="457.7" y="271.5" width="33.9" height="6.28" fill="#000" stroke="#333" stroke-width="0.5"/>
<text x="474.65" y="276.56" transform="matrix(1 .0005 0 1 0 -0.2373)" font-size="5.4" fill="#f0f0f0" stroke="#f0f0f0" text-anchor="middle">-45.62 dBm</text>
<rect x="491.6" y="271.5" width="23.1" height="6.28" fill="#000" stroke="#333" stroke-width="0.5"/>
<text x="503.15" y="276.56" transform="matrix(1 .0005 0 1 0 -0.2516)" font-size="5.4" fill="#f0f0f0" stroke="#f0f0f0" text-anchor="middle">546</text>
<line x1="375.9" y1="303.8" x2="527" y2="303.8" stroke="#5c5c5c" stroke-width="1"/>
<line x1="376.1" y1="304.2" x2="376.1" y2="386.7" stroke="#686868" stroke-width="0.9"/>
<line x1="225.3" y1="304.2" x2="225.3" y2="386.7" stroke="#6a6a6a" stroke-width="0.7"/>
<rect x="226" y="305.2" width="59.8" height="10.2" fill="#2e2e2e" rx="0.8"/>
<text x="227.2" y="311.94" transform="matrix(1 .0005 0 1 0 -0.1136)" font-size="4.9" fill="#e0e0e0" stroke="#e0e0e0">3 CC0 Spectrum</text>
<path d="M282.35 308.95 h2.5 l-1.25 2.5 z" fill="#fff"/>
<text x="226.3" y="321.06" transform="matrix(1 .0005 0 1 0 -0.1132)" font-size="5.25" fill="#fff" stroke="#fff" font-weight="bold">Scale/Div 11.26 dB</text>
<text x="238.3" y="330.29" transform="matrix(1 .0005 0 1 0 -0.1192)" font-size="4.85" fill="#9a9a9a" stroke="#9a9a9a" text-anchor="end" style="stroke-width:.06px">-50.3</text>
<text x="238.3" y="335.26" transform="matrix(1 .0005 0 1 0 -0.1192)" font-size="4.85" fill="#9a9a9a" stroke="#9a9a9a" text-anchor="end" style="stroke-width:.06px">-61.6</text>
<text x="238.3" y="340.23" transform="matrix(1 .0005 0 1 0 -0.1192)" font-size="4.85" fill="#9a9a9a" stroke="#9a9a9a" text-anchor="end" style="stroke-width:.06px">-72.9</text>
<text x="238.3" y="345.2" transform="matrix(1 .0005 0 1 0 -0.1192)" font-size="4.85" fill="#9a9a9a" stroke="#9a9a9a" text-anchor="end" style="stroke-width:.06px">-84.1</text>
<text x="238.3" y="350.17" transform="matrix(1 .0005 0 1 0 -0.1192)" font-size="4.85" fill="#9a9a9a" stroke="#9a9a9a" text-anchor="end" style="stroke-width:.06px">-95.4</text>
<text x="238.3" y="355.14" transform="matrix(1 .0005 0 1 0 -0.1192)" font-size="4.85" fill="#9a9a9a" stroke="#9a9a9a" text-anchor="end" style="stroke-width:.06px">-107</text>
<text x="238.3" y="360.11" transform="matrix(1 .0005 0 1 0 -0.1192)" font-size="4.85" fill="#9a9a9a" stroke="#9a9a9a" text-anchor="end" style="stroke-width:.06px">-118</text>
<text x="238.3" y="365.08" transform="matrix(1 .0005 0 1 0 -0.1192)" font-size="4.85" fill="#9a9a9a" stroke="#9a9a9a" text-anchor="end" style="stroke-width:.06px">-129</text>
<text x="238.3" y="370.05" transform="matrix(1 .0005 0 1 0 -0.1192)" font-size="4.85" fill="#9a9a9a" stroke="#9a9a9a" text-anchor="end" style="stroke-width:.06px">-140</text>
<line x1="241.1" y1="324" x2="375" y2="324" stroke="#686868" stroke-width="0.55"/>
<line x1="241.1" y1="324" x2="241.1" y2="373" stroke="#686868" stroke-width="0.55"/>
<line x1="241.1" y1="328.9" x2="375" y2="328.9" stroke="#686868" stroke-width="0.55"/>
<line x1="254.49" y1="324" x2="254.49" y2="373" stroke="#686868" stroke-width="0.55"/>
<line x1="241.1" y1="333.8" x2="375" y2="333.8" stroke="#686868" stroke-width="0.55"/>
<line x1="267.88" y1="324" x2="267.88" y2="373" stroke="#686868" stroke-width="0.55"/>
<line x1="241.1" y1="338.7" x2="375" y2="338.7" stroke="#686868" stroke-width="0.55"/>
<line x1="281.27" y1="324" x2="281.27" y2="373" stroke="#686868" stroke-width="0.55"/>
<line x1="241.1" y1="343.6" x2="375" y2="343.6" stroke="#686868" stroke-width="0.55"/>
<line x1="294.66" y1="324" x2="294.66" y2="373" stroke="#686868" stroke-width="0.55"/>
<line x1="241.1" y1="348.5" x2="375" y2="348.5" stroke="#686868" stroke-width="0.55"/>
<line x1="308.05" y1="324" x2="308.05" y2="373" stroke="#686868" stroke-width="0.55"/>
<line x1="241.1" y1="353.4" x2="375" y2="353.4" stroke="#686868" stroke-width="0.55"/>
<line x1="321.44" y1="324" x2="321.44" y2="373" stroke="#686868" stroke-width="0.55"/>
<line x1="241.1" y1="358.3" x2="375" y2="358.3" stroke="#686868" stroke-width="0.55"/>
<line x1="334.83" y1="324" x2="334.83" y2="373" stroke="#686868" stroke-width="0.55"/>
<line x1="241.1" y1="363.2" x2="375" y2="363.2" stroke="#686868" stroke-width="0.55"/>
<line x1="348.22" y1="324" x2="348.22" y2="373" stroke="#686868" stroke-width="0.55"/>
<line x1="241.1" y1="368.1" x2="375" y2="368.1" stroke="#686868" stroke-width="0.55"/>
<line x1="361.61" y1="324" x2="361.61" y2="373" stroke="#686868" stroke-width="0.55"/>
<line x1="241.1" y1="373" x2="375" y2="373" stroke="#686868" stroke-width="0.55"/>
<line x1="375" y1="324" x2="375" y2="373" stroke="#686868" stroke-width="0.55"/>
<path d="M241.1 349.38 L241.55 349.41 L242 346.46 L242.45 346.09 L242.9 346.49 L243.35 346.11 L243.8 346.02 L244.25 345.86 L244.7 345.94 L245.15 345.59 L245.6 345.63 L246.05 345.11 L246.5 345.03 L246.95 344.97 L247.4 344.78 L247.85 344.98 L248.3 344.8 L248.75 345.03 L249.2 344.91 L249.65 344.8 L250.1 344.66 L250.55 344.83 L251 344.35 L251.45 344.74 L251.9 344.55 L252.35 344.25 L252.8 344.51 L253.25 344.15 L253.7 344.43 L254.15 344.57 L254.6 328.98 L255.05 328.97 L255.5 329.53 L255.95 329.25 L256.4 329.26 L256.85 329.49 L257.3 329.19 L257.75 329.08 L258.2 329.51 L258.65 329.03 L259.1 329.05 L259.55 329.55 L260 329.01 L260.45 329.37 L260.9 329.53 L261.35 329.48 L261.8 329.06 L262.25 329.36 L262.7 329.26 L263.15 329.43 L263.6 328.96 L264.05 329.08 L264.5 329.2 L264.95 329.51 L265.4 329.51 L265.85 329.22 L266.3 329.55 L266.75 329.54 L267.2 329.34 L267.65 329.48 L268.1 329.09 L268.55 329.03 L269 328.96 L269.45 328.98 L269.9 329.53 L270.35 329.11 L270.8 329.54 L271.25 329.08 L271.7 329.34 L272.15 329.04 L272.6 329.33 L273.05 329.04 L273.5 329.41 L273.95 329.32 L274.4 329.26 L274.85 329.5 L275.3 328.96 L275.75 329.52 L276.2 329.53 L276.65 329.27 L277.1 328.99 L277.55 329.4 L278 329.09 L278.45 329.23 L278.9 329.12 L279.35 329.31 L279.8 329.32 L280.25 329.53 L280.7 329.38 L281.15 329.55 L281.6 329.12 L282.05 329.55 L282.5 328.99 L282.95 329.17 L283.4 329.02 L283.85 329.19 L284.3 329.19 L284.75 329.02 L285.2 329.19 L285.65 329.1 L286.1 329 L286.55 329.12 L287 329.04 L287.45 329.41 L287.9 329.19 L288.35 329 L288.8 329.03 L289.25 329.28 L289.7 329.1 L290.15 329.09 L290.6 329.34 L291.05 329.28 L291.5 329.21 L291.95 329.28 L292.4 329.07 L292.85 329.4 L293.3 329.25 L293.75 329.27 L294.2 329.18 L294.65 329.44 L295.1 329.41 L295.55 328.99 L296 329.23 L296.45 329.04 L296.9 329.37 L297.35 328.95 L297.8 329.53 L298.25 329.41 L298.7 329.07 L299.15 329.55 L299.6 329.1 L300.05 329.34 L300.5 329.34 L300.95 329.17 L301.4 329.17 L301.85 329.46 L302.3 329.41 L302.75 329.48 L303.2 329.49 L303.65 329.5 L304.1 329.2 L304.55 329.38 L305 329.06 L305.45 329.14 L305.9 329.22 L306.35 329.48 L306.8 329.41 L307.25 329.07 L307.7 329.39 L308.15 329.33 L308.6 329.43 L309.05 329.17 L309.5 329.36 L309.95 329.31 L310.4 329.01 L310.85 329.42 L311.3 329.25 L311.75 329.37 L312.2 329.23 L312.65 329.19 L313.1 329.24 L313.55 329.01 L314 329.2 L314.45 329.03 L314.9 329.27 L315.35 329.13 L315.8 329.11 L316.25 329.12 L316.7 329.1 L317.15 329.23 L317.6 329.09 L318.05 329.09 L318.5 329.07 L318.95 329.31 L319.4 329.38 L319.85 328.98 L320.3 329.5 L320.75 329.17 L321.2 329.24 L321.65 329.04 L322.1 329.11 L322.55 328.98 L323 328.96 L323.45 329.18 L323.9 329.04 L324.35 329.17 L324.8 329.43 L325.25 329.39 L325.7 329.05 L326.15 329.43 L326.6 328.98 L327.05 329.33 L327.5 329.48 L327.95 329.32 L328.4 328.98 L328.85 329.04 L329.3 329.48 L329.75 329.14 L330.2 329.42 L330.65 329.18 L331.1 328.95 L331.55 329.32 L332 329.19 L332.45 329.43 L332.9 329.5 L333.35 329.49 L333.8 329.32 L334.25 329.48 L334.7 329.36 L335.15 329.32 L335.6 329.49 L336.05 329.24 L336.5 329.17 L336.95 329.12 L337.4 329.11 L337.85 329.53 L338.3 329.49 L338.75 329.39 L339.2 329.04 L339.65 329.32 L340.1 329.14 L340.55 329.49 L341 329.12 L341.45 328.98 L341.9 329.29 L342.35 329.2 L342.8 329.45 L343.25 329.37 L343.7 329.35 L344.15 328.98 L344.6 329.3 L345.05 329.05 L345.5 329.05 L345.95 329.34 L346.4 329.34 L346.85 329.26 L347.3 329.38 L347.75 329.21 L348.2 329.06 L348.65 329.02 L349.1 329.11 L349.55 329.36 L350 329.51 L350.45 329.05 L350.9 329.05 L351.35 329.31 L351.8 329.54 L352.25 329.27 L352.7 329.09 L353.15 329.3 L353.6 329.32 L354.05 328.97 L354.5 328.98 L354.95 329.52 L355.4 329.4 L355.85 329.07 L356.3 329.4 L356.75 329.24 L357.2 329.13 L357.65 329.51 L358.1 329.41 L358.55 329.4 L359 329.01 L359.45 329.38 L359.9 329.21 L360.35 328.98 L360.8 329.45 L361.25 329.26 L361.7 343.77 L362.15 343.63 L362.6 344.25 L363.05 344.62 L363.5 344.32 L363.95 344.52 L364.4 345.21 L364.85 345.12 L365.3 345.29 L365.75 345.51 L366.2 345.54 L366.65 346 L367.1 345.87 L367.55 346.39 L368 346.17 L368.45 346.63 L368.9 346.75 L369.35 346.84 L369.8 347.23 L370.25 347.11 L370.7 347.52 L371.15 347.6 L371.6 347.9 L372.05 347.98 L372.5 348.35 L372.95 348.28 L373.4 348.21 L373.85 348.37 L374.3 348.97 L374.75 348.91 L374.75 365.79 L374.3 365.3 L373.85 368.92 L373.4 368.58 L372.95 365.21 L372.5 366.75 L372.05 366.42 L371.6 366.6 L371.15 363.46 L370.7 365.27 L370.25 363.13 L369.8 362.41 L369.35 363.1 L368.9 363.22 L368.45 364.45 L368 362.68 L367.55 362.47 L367.1 362.07 L366.65 363.49 L366.2 363.34 L365.75 360.82 L365.3 359.28 L364.85 360.65 L364.4 360.82 L363.95 361.4 L363.5 358.05 L363.05 358.89 L362.6 358.2 L362.15 360.1 L361.7 356.23 L361.25 347.92 L360.8 350.59 L360.35 347.12 L359.9 348.31 L359.45 350.18 L359 347.22 L358.55 347.92 L358.1 349.25 L357.65 349.06 L357.2 347.75 L356.75 349.39 L356.3 349.12 L355.85 349.78 L355.4 349.14 L354.95 349.84 L354.5 351 L354.05 349.98 L353.6 350.2 L353.15 349.22 L352.7 351.18 L352.25 346.02 L351.8 350.07 L351.35 350.22 L350.9 348.86 L350.45 351.44 L350 348.39 L349.55 351.99 L349.1 348.57 L348.65 351.74 L348.2 349.34 L347.75 348.41 L347.3 349.2 L346.85 348.56 L346.4 349.12 L345.95 348.03 L345.5 348.51 L345.05 347.61 L344.6 349.41 L344.15 351.44 L343.7 349.79 L343.25 347.24 L342.8 346.34 L342.35 347.16 L341.9 348.72 L341.45 350.66 L341 349.07 L340.55 350.65 L340.1 351.7 L339.65 349.38 L339.2 347.02 L338.75 348.29 L338.3 348.65 L337.85 349.07 L337.4 347.94 L336.95 348.19 L336.5 347.99 L336.05 349.78 L335.6 348.01 L335.15 347.8 L334.7 348.52 L334.25 349.83 L333.8 348 L333.35 351.77 L332.9 352.41 L332.45 351.06 L332 347.5 L331.55 351.21 L331.1 350.13 L330.65 348.8 L330.2 348.69 L329.75 348.66 L329.3 350.61 L328.85 351.49 L328.4 348.78 L327.95 348.26 L327.5 350.86 L327.05 348.96 L326.6 349.35 L326.15 349.04 L325.7 347.6 L325.25 347.7 L324.8 349.14 L324.35 349.63 L323.9 346.53 L323.45 350.64 L323 350.95 L322.55 351.22 L322.1 350.94 L321.65 349.79 L321.2 350.06 L320.75 349.94 L320.3 351.13 L319.85 348.45 L319.4 346.89 L318.95 353.01 L318.5 348.13 L318.05 348.42 L317.6 348.47 L317.15 346.01 L316.7 349.76 L316.25 350.46 L315.8 347.7 L315.35 347.64 L314.9 350.8 L314.45 350.57 L314 352.16 L313.55 348.57 L313.1 347.85 L312.65 347.91 L312.2 350.16 L311.75 347.21 L311.3 349.65 L310.85 351.35 L310.4 349.48 L309.95 354.68 L309.5 349.31 L309.05 353.39 L308.6 349.34 L308.15 348.37 L307.7 349.57 L307.25 348.99 L306.8 352.62 L306.35 350.28 L305.9 348.52 L305.45 351 L305 349.57 L304.55 348.52 L304.1 348.34 L303.65 346.12 L303.2 353.19 L302.75 348.66 L302.3 348.23 L301.85 348.04 L301.4 346.88 L300.95 349.87 L300.5 347.01 L300.05 346.81 L299.6 351.38 L299.15 347.83 L298.7 352.03 L298.25 347.34 L297.8 349.52 L297.35 351.27 L296.9 354.45 L296.45 348.67 L296 350.11 L295.55 351.85 L295.1 351.7 L294.65 348.73 L294.2 349.18 L293.75 354.43 L293.3 348.72 L292.85 347.48 L292.4 349.43 L291.95 348.14 L291.5 348.19 L291.05 348.32 L290.6 348.08 L290.15 349.74 L289.7 350.28 L289.25 347.97 L288.8 349.93 L288.35 349.78 L287.9 350.22 L287.45 352.4 L287 349.98 L286.55 348.67 L286.1 351.14 L285.65 347.62 L285.2 351.79 L284.75 347.99 L284.3 349.31 L283.85 350.08 L283.4 348.77 L282.95 349.87 L282.5 349.11 L282.05 350.49 L281.6 348.11 L281.15 350.65 L280.7 348.45 L280.25 347.01 L279.8 348.15 L279.35 349.3 L278.9 348.54 L278.45 348.24 L278 348.64 L277.55 350.27 L277.1 354.04 L276.65 347.54 L276.2 349.66 L275.75 350.38 L275.3 350.74 L274.85 349.98 L274.4 349.73 L273.95 349.55 L273.5 349.61 L273.05 351.18 L272.6 349.93 L272.15 348.88 L271.7 352.64 L271.25 349.38 L270.8 346.81 L270.35 347.37 L269.9 351.57 L269.45 349.02 L269 350.92 L268.55 352.2 L268.1 349.9 L267.65 349.46 L267.2 350.09 L266.75 348.12 L266.3 346.06 L265.85 348.6 L265.4 349.53 L264.95 349.27 L264.5 353.36 L264.05 350.51 L263.6 347.15 L263.15 349.92 L262.7 348.4 L262.25 349.79 L261.8 350.99 L261.35 347.19 L260.9 349.85 L260.45 348.89 L260 348.13 L259.55 348.55 L259.1 348.4 L258.65 353.22 L258.2 348.91 L257.75 347.12 L257.3 349.34 L256.85 348.18 L256.4 351.71 L255.95 349.87 L255.5 348.15 L255.05 348.3 L254.6 348.66 L254.15 360.84 L253.7 360 L253.25 362.04 L252.8 360.43 L252.35 361.61 L251.9 365.74 L251.45 366.82 L251 366.45 L250.55 364.63 L250.1 367.97 L249.65 367.91 L249.2 368.31 L248.75 364.29 L248.3 366.61 L247.85 367.67 L247.4 365.02 L246.95 368.19 L246.5 368.74 L246.05 367.6 L245.6 367.49 L245.15 364.1 L244.7 364.75 L244.25 366.28 L243.8 366.94 L243.35 366.23 L242.9 364.13 L242.45 364.76 L242 367.57 L241.55 367.46 L241.1 364.42Z" fill="#8c8c12"/>
<path d="M241.1 349.38 L241.55 349.41 L242 346.46 L242.45 346.09 L242.9 346.49 L243.35 346.11 L243.8 346.02 L244.25 345.86 L244.7 345.94 L245.15 345.59 L245.6 345.63 L246.05 345.11 L246.5 345.03 L246.95 344.97 L247.4 344.78 L247.85 344.98 L248.3 344.8 L248.75 345.03 L249.2 344.91 L249.65 344.8 L250.1 344.66 L250.55 344.83 L251 344.35 L251.45 344.74 L251.9 344.55 L252.35 344.25 L252.8 344.51 L253.25 344.15 L253.7 344.43 L254.15 344.57 L254.6 328.98 L255.05 328.97 L255.5 329.53 L255.95 329.25 L256.4 329.26 L256.85 329.49 L257.3 329.19 L257.75 329.08 L258.2 329.51 L258.65 329.03 L259.1 329.05 L259.55 329.55 L260 329.01 L260.45 329.37 L260.9 329.53 L261.35 329.48 L261.8 329.06 L262.25 329.36 L262.7 329.26 L263.15 329.43 L263.6 328.96 L264.05 329.08 L264.5 329.2 L264.95 329.51 L265.4 329.51 L265.85 329.22 L266.3 329.55 L266.75 329.54 L267.2 329.34 L267.65 329.48 L268.1 329.09 L268.55 329.03 L269 328.96 L269.45 328.98 L269.9 329.53 L270.35 329.11 L270.8 329.54 L271.25 329.08 L271.7 329.34 L272.15 329.04 L272.6 329.33 L273.05 329.04 L273.5 329.41 L273.95 329.32 L274.4 329.26 L274.85 329.5 L275.3 328.96 L275.75 329.52 L276.2 329.53 L276.65 329.27 L277.1 328.99 L277.55 329.4 L278 329.09 L278.45 329.23 L278.9 329.12 L279.35 329.31 L279.8 329.32 L280.25 329.53 L280.7 329.38 L281.15 329.55 L281.6 329.12 L282.05 329.55 L282.5 328.99 L282.95 329.17 L283.4 329.02 L283.85 329.19 L284.3 329.19 L284.75 329.02 L285.2 329.19 L285.65 329.1 L286.1 329 L286.55 329.12 L287 329.04 L287.45 329.41 L287.9 329.19 L288.35 329 L288.8 329.03 L289.25 329.28 L289.7 329.1 L290.15 329.09 L290.6 329.34 L291.05 329.28 L291.5 329.21 L291.95 329.28 L292.4 329.07 L292.85 329.4 L293.3 329.25 L293.75 329.27 L294.2 329.18 L294.65 329.44 L295.1 329.41 L295.55 328.99 L296 329.23 L296.45 329.04 L296.9 329.37 L297.35 328.95 L297.8 329.53 L298.25 329.41 L298.7 329.07 L299.15 329.55 L299.6 329.1 L300.05 329.34 L300.5 329.34 L300.95 329.17 L301.4 329.17 L301.85 329.46 L302.3 329.41 L302.75 329.48 L303.2 329.49 L303.65 329.5 L304.1 329.2 L304.55 329.38 L305 329.06 L305.45 329.14 L305.9 329.22 L306.35 329.48 L306.8 329.41 L307.25 329.07 L307.7 329.39 L308.15 329.33 L308.6 329.43 L309.05 329.17 L309.5 329.36 L309.95 329.31 L310.4 329.01 L310.85 329.42 L311.3 329.25 L311.75 329.37 L312.2 329.23 L312.65 329.19 L313.1 329.24 L313.55 329.01 L314 329.2 L314.45 329.03 L314.9 329.27 L315.35 329.13 L315.8 329.11 L316.25 329.12 L316.7 329.1 L317.15 329.23 L317.6 329.09 L318.05 329.09 L318.5 329.07 L318.95 329.31 L319.4 329.38 L319.85 328.98 L320.3 329.5 L320.75 329.17 L321.2 329.24 L321.65 329.04 L322.1 329.11 L322.55 328.98 L323 328.96 L323.45 329.18 L323.9 329.04 L324.35 329.17 L324.8 329.43 L325.25 329.39 L325.7 329.05 L326.15 329.43 L326.6 328.98 L327.05 329.33 L327.5 329.48 L327.95 329.32 L328.4 328.98 L328.85 329.04 L329.3 329.48 L329.75 329.14 L330.2 329.42 L330.65 329.18 L331.1 328.95 L331.55 329.32 L332 329.19 L332.45 329.43 L332.9 329.5 L333.35 329.49 L333.8 329.32 L334.25 329.48 L334.7 329.36 L335.15 329.32 L335.6 329.49 L336.05 329.24 L336.5 329.17 L336.95 329.12 L337.4 329.11 L337.85 329.53 L338.3 329.49 L338.75 329.39 L339.2 329.04 L339.65 329.32 L340.1 329.14 L340.55 329.49 L341 329.12 L341.45 328.98 L341.9 329.29 L342.35 329.2 L342.8 329.45 L343.25 329.37 L343.7 329.35 L344.15 328.98 L344.6 329.3 L345.05 329.05 L345.5 329.05 L345.95 329.34 L346.4 329.34 L346.85 329.26 L347.3 329.38 L347.75 329.21 L348.2 329.06 L348.65 329.02 L349.1 329.11 L349.55 329.36 L350 329.51 L350.45 329.05 L350.9 329.05 L351.35 329.31 L351.8 329.54 L352.25 329.27 L352.7 329.09 L353.15 329.3 L353.6 329.32 L354.05 328.97 L354.5 328.98 L354.95 329.52 L355.4 329.4 L355.85 329.07 L356.3 329.4 L356.75 329.24 L357.2 329.13 L357.65 329.51 L358.1 329.41 L358.55 329.4 L359 329.01 L359.45 329.38 L359.9 329.21 L360.35 328.98 L360.8 329.45 L361.25 329.26 L361.7 343.77 L362.15 343.63 L362.6 344.25 L363.05 344.62 L363.5 344.32 L363.95 344.52 L364.4 345.21 L364.85 345.12 L365.3 345.29 L365.75 345.51 L366.2 345.54 L366.65 346 L367.1 345.87 L367.55 346.39 L368 346.17 L368.45 346.63 L368.9 346.75 L369.35 346.84 L369.8 347.23 L370.25 347.11 L370.7 347.52 L371.15 347.6 L371.6 347.9 L372.05 347.98 L372.5 348.35 L372.95 348.28 L373.4 348.21 L373.85 348.37 L374.3 348.97 L374.75 348.91 L374.75 365.79 L374.3 365.3 L373.85 368.92 L373.4 368.58 L372.95 365.21 L372.5 366.75 L372.05 366.42 L371.6 366.6 L371.15 363.46 L370.7 365.27 L370.25 363.13 L369.8 362.41 L369.35 363.1 L368.9 363.22 L368.45 364.45 L368 362.68 L367.55 362.47 L367.1 362.07 L366.65 363.49 L366.2 363.34 L365.75 360.82 L365.3 359.28 L364.85 360.65 L364.4 360.82 L363.95 361.4 L363.5 358.05 L363.05 358.89 L362.6 358.2 L362.15 360.1 L361.7 356.23 L361.25 345.79 L360.8 346.72 L360.35 345.23 L359.9 345.66 L359.45 346.39 L359 345.53 L358.55 346.29 L358.1 345.84 L357.65 344.52 L357.2 345.21 L356.75 344.72 L356.3 344.61 L355.85 344.48 L355.4 346.11 L354.95 345.68 L354.5 346.46 L354.05 344.73 L353.6 344.79 L353.15 345.76 L352.7 346.52 L352.25 344.42 L351.8 346.42 L351.35 345.31 L350.9 346.6 L350.45 346.57 L350 346.55 L349.55 346.6 L349.1 344.53 L348.65 346.54 L348.2 346.79 L347.75 346.59 L347.3 345.55 L346.85 344.55 L346.4 345.95 L345.95 344.87 L345.5 346.59 L345.05 344.4 L344.6 345.84 L344.15 346.37 L343.7 345.05 L343.25 345.48 L342.8 344.78 L342.35 345.12 L341.9 345.13 L341.45 345.57 L341 345.9 L340.55 346.16 L340.1 346.72 L339.65 346.7 L339.2 345.19 L338.75 345.29 L338.3 345 L337.85 345.49 L337.4 346.24 L336.95 345.19 L336.5 344.88 L336.05 345.82 L335.6 345.5 L335.15 345.01 L334.7 346.13 L334.25 345.09 L333.8 346.06 L333.35 345.97 L332.9 345.15 L332.45 345.61 L332 344.56 L331.55 346.37 L331.1 346.77 L330.65 345.28 L330.2 345.96 L329.75 345.34 L329.3 346.42 L328.85 346.73 L328.4 346.65 L327.95 344.87 L327.5 345.94 L327.05 344.61 L326.6 346.59 L326.15 346.33 L325.7 344.56 L325.25 344.81 L324.8 345.35 L324.35 346.26 L323.9 344.67 L323.45 345.37 L323 346.24 L322.55 346.19 L322.1 346.77 L321.65 345.68 L321.2 345.38 L320.75 345.89 L320.3 346.36 L319.85 346.8 L319.4 345.24 L318.95 346.26 L318.5 344.58 L318.05 344.52 L317.6 345.48 L317.15 344.49 L316.7 345.66 L316.25 346.58 L315.8 345.45 L315.35 345.07 L314.9 346.26 L314.45 345.51 L314 346.77 L313.55 344.57 L313.1 345.71 L312.65 344.78 L312.2 346.28 L311.75 344.76 L311.3 344.42 L310.85 346.59 L310.4 346.12 L309.95 346.33 L309.5 346.62 L309.05 345.2 L308.6 344.55 L308.15 345.37 L307.7 345.54 L307.25 345.7 L306.8 345.14 L306.35 345.75 L305.9 344.66 L305.45 346.14 L305 345.97 L304.55 345.15 L304.1 346.1 L303.65 344.53 L303.2 345.56 L302.75 344.66 L302.3 344.87 L301.85 344.56 L301.4 345.35 L300.95 345.58 L300.5 344.59 L300.05 344.53 L299.6 345.66 L299.15 345.07 L298.7 345.03 L298.25 344.64 L297.8 345.9 L297.35 344.7 L296.9 346.43 L296.45 346.73 L296 345.48 L295.55 346.63 L295.1 346.33 L294.65 346.72 L294.2 345.95 L293.75 346.3 L293.3 345.78 L292.85 344.9 L292.4 344.45 L291.95 345.17 L291.5 345.71 L291.05 345.49 L290.6 344.58 L290.15 345.56 L289.7 346.17 L289.25 344.81 L288.8 346.49 L288.35 346.64 L287.9 346.5 L287.45 346.28 L287 346.73 L286.55 344.52 L286.1 346.62 L285.65 344.56 L285.2 346.66 L284.75 345.2 L284.3 346.15 L283.85 344.78 L283.4 345.28 L282.95 345.85 L282.5 344.62 L282.05 345.33 L281.6 344.58 L281.15 345.72 L280.7 345.09 L280.25 344.64 L279.8 344.72 L279.35 345.2 L278.9 344.51 L278.45 346.43 L278 346.22 L277.55 345.54 L277.1 346.64 L276.65 344.99 L276.2 345.3 L275.75 345.94 L275.3 346.05 L274.85 346.21 L274.4 345.43 L273.95 344.75 L273.5 346.13 L273.05 346.54 L272.6 344.6 L272.15 345.81 L271.7 345 L271.25 344.84 L270.8 345.18 L270.35 344.41 L269.9 345.84 L269.45 346 L269 345.9 L268.55 346.77 L268.1 344.88 L267.65 346.73 L267.2 345.96 L266.75 345.63 L266.3 344.49 L265.85 346.01 L265.4 345.91 L264.95 346.73 L264.5 346.6 L264.05 345.03 L263.6 344.61 L263.15 344.84 L262.7 345.59 L262.25 346.67 L261.8 346.21 L261.35 344.6 L260.9 344.67 L260.45 345.32 L260 345.28 L259.55 345.37 L259.1 346 L258.65 345.52 L258.2 345.94 L257.75 345.13 L257.3 345.16 L256.85 344.89 L256.4 346.5 L255.95 346.34 L255.5 345.85 L255.05 346.55 L254.6 344.86 L254.15 360.84 L253.7 360 L253.25 362.04 L252.8 360.43 L252.35 361.61 L251.9 365.74 L251.45 366.82 L251 366.45 L250.55 364.63 L250.1 367.97 L249.65 367.91 L249.2 368.31 L248.75 364.29 L248.3 366.61 L247.85 367.67 L247.4 365.02 L246.95 368.19 L246.5 368.74 L246.05 367.6 L245.6 367.49 L245.15 364.1 L244.7 364.75 L244.25 366.28 L243.8 366.94 L243.35 366.23 L242.9 364.13 L242.45 364.76 L242 367.57 L241.55 367.46 L241.1 364.42Z" fill="#ffff00"/>
<text x="226.3" y="378.66" transform="matrix(1 .0005 0 1 0 -0.1132)" font-size="5.25" fill="#fff" stroke="#fff" font-weight="bold">Ctr: 3.6 GHz</text>
<text x="374.6" y="378.66" transform="matrix(1 .0005 0 1 0 -0.1873)" font-size="5.25" fill="#fff" stroke="#fff" text-anchor="end" font-weight="bold">Width: 122.9 MHz</text>
<text x="226.3" y="384.86" transform="matrix(1 .0005 0 1 0 -0.1132)" font-size="5.25" fill="#fff" stroke="#fff" font-weight="bold">Res BW: 995.2 Hz</text>
<text x="275" y="384.86" transform="matrix(1 .0005 0 1 0 -0.1375)" font-size="5.25" fill="#fff" stroke="#fff" font-weight="bold">Info BW: 90.30 MHz</text>
<rect x="376.6" y="305.2" width="60.1" height="10.2" fill="#2a2a2a" rx="0.8"/>
<text x="377.8" y="311.94" transform="matrix(1 .0005 0 1 0 -0.1889)" font-size="4.9" fill="#e0e0e0" stroke="#e0e0e0">4 CC0 Error</text>
<path d="M433.25 308.95 h2.5 l-1.25 2.5 z" fill="#fff"/>
<rect x="376.6" y="316.2" width="48.8" height="6.42" fill="#272727" stroke="#1a1a1a" stroke-width="0.3"/>
<text x="377.6" y="321.31" transform="matrix(1 .0005 0 1 0 -0.1888)" font-size="5.35" fill="#f0f0f0" stroke="#f0f0f0">Channel Power</text>
<rect x="425.4" y="316.2" width="39.2" height="6.42" fill="#000" stroke="#333" stroke-width="0.5"/>
<text x="463" y="321.31" transform="matrix(1 .0005 0 1 0 -0.2315)" font-size="5.35" fill="#f0f0f0" stroke="#f0f0f0" text-anchor="end">-11.60 dBm</text>
<rect x="376.6" y="322.62" width="48.8" height="6.42" fill="#272727" stroke="#1a1a1a" stroke-width="0.3"/>
<text x="377.6" y="327.73" transform="matrix(1 .0005 0 1 0 -0.1888)" font-size="5.35" fill="#f0f0f0" stroke="#f0f0f0">EVM</text>
<rect x="425.4" y="322.62" width="39.2" height="6.42" fill="#000" stroke="#333" stroke-width="0.5"/>
<text x="463" y="327.73" transform="matrix(1 .0005 0 1 0 -0.2315)" font-size="5.35" fill="#f0f0f0" stroke="#f0f0f0" text-anchor="end">0.62 %rms</text>
<rect x="376.6" y="329.04" width="48.8" height="6.42" fill="#272727" stroke="#1a1a1a" stroke-width="0.3"/>
<text x="377.6" y="334.15" transform="matrix(1 .0005 0 1 0 -0.1888)" font-size="5.35" fill="#f0f0f0" stroke="#f0f0f0">EVM Peak</text>
<rect x="425.4" y="329.04" width="39.2" height="6.42" fill="#000" stroke="#333" stroke-width="0.5"/>
<text x="463" y="334.15" transform="matrix(1 .0005 0 1 0 -0.2315)" font-size="5.35" fill="#f0f0f0" stroke="#f0f0f0" text-anchor="end">4.00 %</text>
<rect x="376.6" y="335.46" width="48.8" height="6.42" fill="#272727" stroke="#1a1a1a" stroke-width="0.3"/>
<text x="377.6" y="340.57" transform="matrix(1 .0005 0 1 0 -0.1888)" font-size="5.35" fill="#f0f0f0" stroke="#f0f0f0">Frequency Error</text>
<rect x="425.4" y="335.46" width="39.2" height="6.42" fill="#000" stroke="#333" stroke-width="0.5"/>
<text x="463" y="340.57" transform="matrix(1 .0005 0 1 0 -0.2315)" font-size="5.35" fill="#f0f0f0" stroke="#f0f0f0" text-anchor="end">46.1 mHz</text>
<rect x="376.6" y="341.88" width="48.8" height="6.42" fill="#272727" stroke="#1a1a1a" stroke-width="0.3"/>
<text x="377.6" y="346.99" transform="matrix(1 .0005 0 1 0 -0.1888)" font-size="5.35" fill="#f0f0f0" stroke="#f0f0f0">Symbol Clock Error</text>
<rect x="425.4" y="341.88" width="39.2" height="6.42" fill="#000" stroke="#333" stroke-width="0.5"/>
<text x="463" y="346.99" transform="matrix(1 .0005 0 1 0 -0.2315)" font-size="5.35" fill="#f0f0f0" stroke="#f0f0f0" text-anchor="end">0.000 ppm</text>
<rect x="376.6" y="348.3" width="48.8" height="6.42" fill="#272727" stroke="#1a1a1a" stroke-width="0.3"/>
<text x="377.6" y="353.41" transform="matrix(1 .0005 0 1 0 -0.1888)" font-size="5.35" fill="#f0f0f0" stroke="#f0f0f0">IQ Offset</text>
<rect x="425.4" y="348.3" width="39.2" height="6.42" fill="#000" stroke="#333" stroke-width="0.5"/>
<text x="463" y="353.41" transform="matrix(1 .0005 0 1 0 -0.2315)" font-size="5.35" fill="#f0f0f0" stroke="#f0f0f0" text-anchor="end">-67.06 dB</text>
<rect x="376.6" y="354.72" width="48.8" height="6.42" fill="#272727" stroke="#1a1a1a" stroke-width="0.3"/>
<text x="377.6" y="359.83" transform="matrix(1 .0005 0 1 0 -0.1888)" font-size="5.35" fill="#f0f0f0" stroke="#f0f0f0">Time Offset</text>
<rect x="425.4" y="354.72" width="39.2" height="6.42" fill="#000" stroke="#333" stroke-width="0.5"/>
<text x="463" y="359.83" transform="matrix(1 .0005 0 1 0 -0.2315)" font-size="5.35" fill="#f0f0f0" stroke="#f0f0f0" text-anchor="end">10.0 ms</text>
<rect x="376.6" y="361.14" width="48.8" height="6.42" fill="#272727" stroke="#1a1a1a" stroke-width="0.3"/>
<text x="377.6" y="366.25" transform="matrix(1 .0005 0 1 0 -0.1888)" font-size="5.35" fill="#f0f0f0" stroke="#f0f0f0">Sync Correlation</text>
<rect x="425.4" y="361.14" width="39.2" height="6.42" fill="#000" stroke="#333" stroke-width="0.5"/>
<text x="463" y="366.25" transform="matrix(1 .0005 0 1 0 -0.2315)" font-size="5.35" fill="#f0f0f0" stroke="#f0f0f0" text-anchor="end">100.0 %</text>
<rect x="376.6" y="367.56" width="48.8" height="6.42" fill="#272727" stroke="#1a1a1a" stroke-width="0.3"/>
<text x="377.6" y="372.67" transform="matrix(1 .0005 0 1 0 -0.1888)" font-size="5.35" fill="#f0f0f0" stroke="#f0f0f0">Sync Source</text>
<rect x="425.4" y="367.56" width="39.2" height="6.42" fill="#000" stroke="#333" stroke-width="0.5"/>
<text x="463" y="372.67" transform="matrix(1 .0005 0 1 0 -0.2315)" font-size="5.35" fill="#f0f0f0" stroke="#f0f0f0" text-anchor="end">SS Block</text>
<rect x="224.9" y="386.7" width="302.9" height="14.8" fill="#1c1c1c"/>
<line x1="224.9" y1="386.7" x2="527.8" y2="386.7" stroke="#505050" stroke-width="0.7"/>
<rect x="226.1" y="388.5" width="13.5" height="12.1" fill="#222" stroke="#3e3e3e" stroke-width="0.7" rx="0.8"/>
<path d="M228.15 391.65 l4.0 -0.55 v3.45 h-4.0z M232.65 391.05 l5.0 -0.7 v4.2 h-5.0z M228.15 395.05 h4.0 v3.1 l-4.0 -0.55z M232.65 395.05 h5.0 v3.9 l-5.0 -0.7z" fill="#fff"/>
<rect x="242.7" y="388.5" width="13.6" height="12.1" fill="#222" stroke="#3e3e3e" stroke-width="0.7" rx="0.8"/>
<path d="M247.3 392.85 q4.8 -1.2 5.6 2.6 q0.3 2.4 -1.2 4.2" fill="none" stroke="#fff" stroke-width="1.7"/>
<path d="M244.3 391.05 l4.8 -0.7 l-3.3 4.4z" fill="#fff"/>
<rect x="259.3" y="388.5" width="13.6" height="12.1" fill="#222" stroke="#3e3e3e" stroke-width="0.7" rx="0.8"/>
<path d="M268.3 392.85 q-4.8 -1.2 -5.6 2.6 q-0.3 2.4 1.2 4.2" fill="none" stroke="#8a8a8a" stroke-width="1.7"/>
<path d="M271.3 391.05 l-4.8 -0.7 l3.3 4.4z" fill="#8a8a8a"/>
<rect x="276.3" y="388.5" width="13.6" height="12.1" fill="#222" stroke="#3e3e3e" stroke-width="0.7" rx="0.8"/>
<path d="M278.2 398.45 v-7.6 h4.3 l1.0 1.4 h4.5 v6.2z" fill="#fff"/>
<rect x="293.2" y="388.5" width="13.5" height="12.1" fill="#222" stroke="#3e3e3e" stroke-width="0.7" rx="0.8"/>
<text x="299.95" y="399.04" transform="matrix(1 .0005 0 1 0 -0.1500)" font-size="11.8" fill="#fff" stroke="#fff" text-anchor="middle" font-weight="bold">?</text>
<rect x="308.3" y="388.3" width="36" height="12.5" fill="#141414" stroke="#333" stroke-width="0.5"/>
<text x="326.6" y="394.08" transform="matrix(1 .0005 0 1 0 -0.1633)" font-size="5.3" fill="#f0f0f0" stroke="#f0f0f0" text-anchor="middle">Mar 26, 2018</text>
<text x="326.6" y="399.88" transform="matrix(1 .0005 0 1 0 -0.1633)" font-size="5.3" fill="#f0f0f0" stroke="#f0f0f0" text-anchor="middle">4:18:54 PM</text>
<ellipse cx="351.5" cy="394.6" rx="5.2" ry="3.6" fill="#4a4a4a" stroke="#6a6a6a" stroke-width="0.5"/><path d="M348.2 397 l-1.2 2.6 l3.2 -1.6z" fill="#4a4a4a"/>
<text x="351.5" y="395.88" transform="matrix(1 .0005 0 1 0 -0.1758)" font-size="3.6" fill="#8a8a8a" stroke="#8a8a8a" text-anchor="middle">...</text>
<path d="M358.6 400 l5.3 -9.4 l5.3 9.4z" fill="#242424"/>
<line x1="456" y1="387.2" x2="456" y2="401.3" stroke="#3a3a3a" stroke-width="0.7"/>
<rect x="459.1" y="388.5" width="13.5" height="12.1" fill="#1a1a1a" stroke="#3e3e3e" stroke-width="0.7" rx="0.6"/>
<rect x="464.9" y="390.65" width="2.3" height="2.3" fill="#fff"/>
<rect x="468.4" y="390.65" width="2.3" height="2.3" fill="#fff"/>
<rect x="461.1" y="396.05" width="2.3" height="2.3" fill="#fff"/>
<rect x="464.9" y="396.05" width="2.3" height="2.3" fill="#fff"/>
<rect x="468.4" y="396.05" width="2.3" height="2.3" fill="#fff"/>
<line x1="466.05" y1="391.8" x2="469.55" y2="391.8" stroke="#fff" stroke-width="0.7"/>
<line x1="462.25" y1="397.2" x2="469.55" y2="397.2" stroke="#fff" stroke-width="0.7"/>
<line x1="466.05" y1="391.8" x2="466.05" y2="397.2" stroke="#fff" stroke-width="0.7"/>
<rect x="477" y="388.5" width="12.3" height="12.1" fill="#1a1a1a" stroke="#7a7a7a" stroke-width="0.7" rx="0.6"/>
<path d="M480.35 393.1 l2.6 -2.6 l4.2 3.2 l0.2 3.6 l-2.8 1.6 l-3.2 -1.2 l-2 -3.2z" fill="#e8e8e8"/>
<line x1="477.75" y1="389.5" x2="488.15" y2="399.9" stroke="#d0d0d0" stroke-width="0.7"/>
<rect x="494.2" y="388.5" width="12.9" height="12.1" fill="#1a1a1a" stroke="#3e3e3e" stroke-width="0.7" rx="0.6"/>
<rect x="496.05" y="390.1" width="4.1" height="3.9" fill="#181818" stroke="#2e2e2e" stroke-width="0.5"/>
<rect x="501.25" y="390.1" width="4.1" height="3.9" fill="#181818" stroke="#2e2e2e" stroke-width="0.5"/>
<rect x="496.05" y="395.2" width="4.1" height="3.9" fill="#181818" stroke="#2e2e2e" stroke-width="0.5"/>
<rect x="501.25" y="395.2" width="4.1" height="3.9" fill="#181818" stroke="#2e2e2e" stroke-width="0.5"/>
<rect x="510.8" y="388.5" width="12.9" height="12.1" fill="#1a1a1a" stroke="#7a7a7a" stroke-width="0.7" rx="0.6"/>
<line x1="516.25" y1="393.5" x2="512.65" y2="389.9" stroke="#fff" stroke-width="0.9"/>
<path d="M511.85 389.2 l3.2 0 l-3.2 3.2 z" fill="#fff"/>
<line x1="516.25" y1="395.5" x2="512.65" y2="399.1" stroke="#fff" stroke-width="0.9"/>
<path d="M511.85 399.8 l3.2 0 l-3.2 -3.2 z" fill="#fff"/>
<line x1="518.25" y1="393.5" x2="521.85" y2="389.9" stroke="#fff" stroke-width="0.9"/>
<path d="M522.65 389.2 l-3.2 0 l3.2 3.2 z" fill="#fff"/>
<line x1="518.25" y1="395.5" x2="521.85" y2="399.1" stroke="#fff" stroke-width="0.9"/>
<path d="M522.65 399.8 l-3.2 0 l3.2 -3.2 z" fill="#fff"/>
</g>
</g>
</svg>
</body></html>
